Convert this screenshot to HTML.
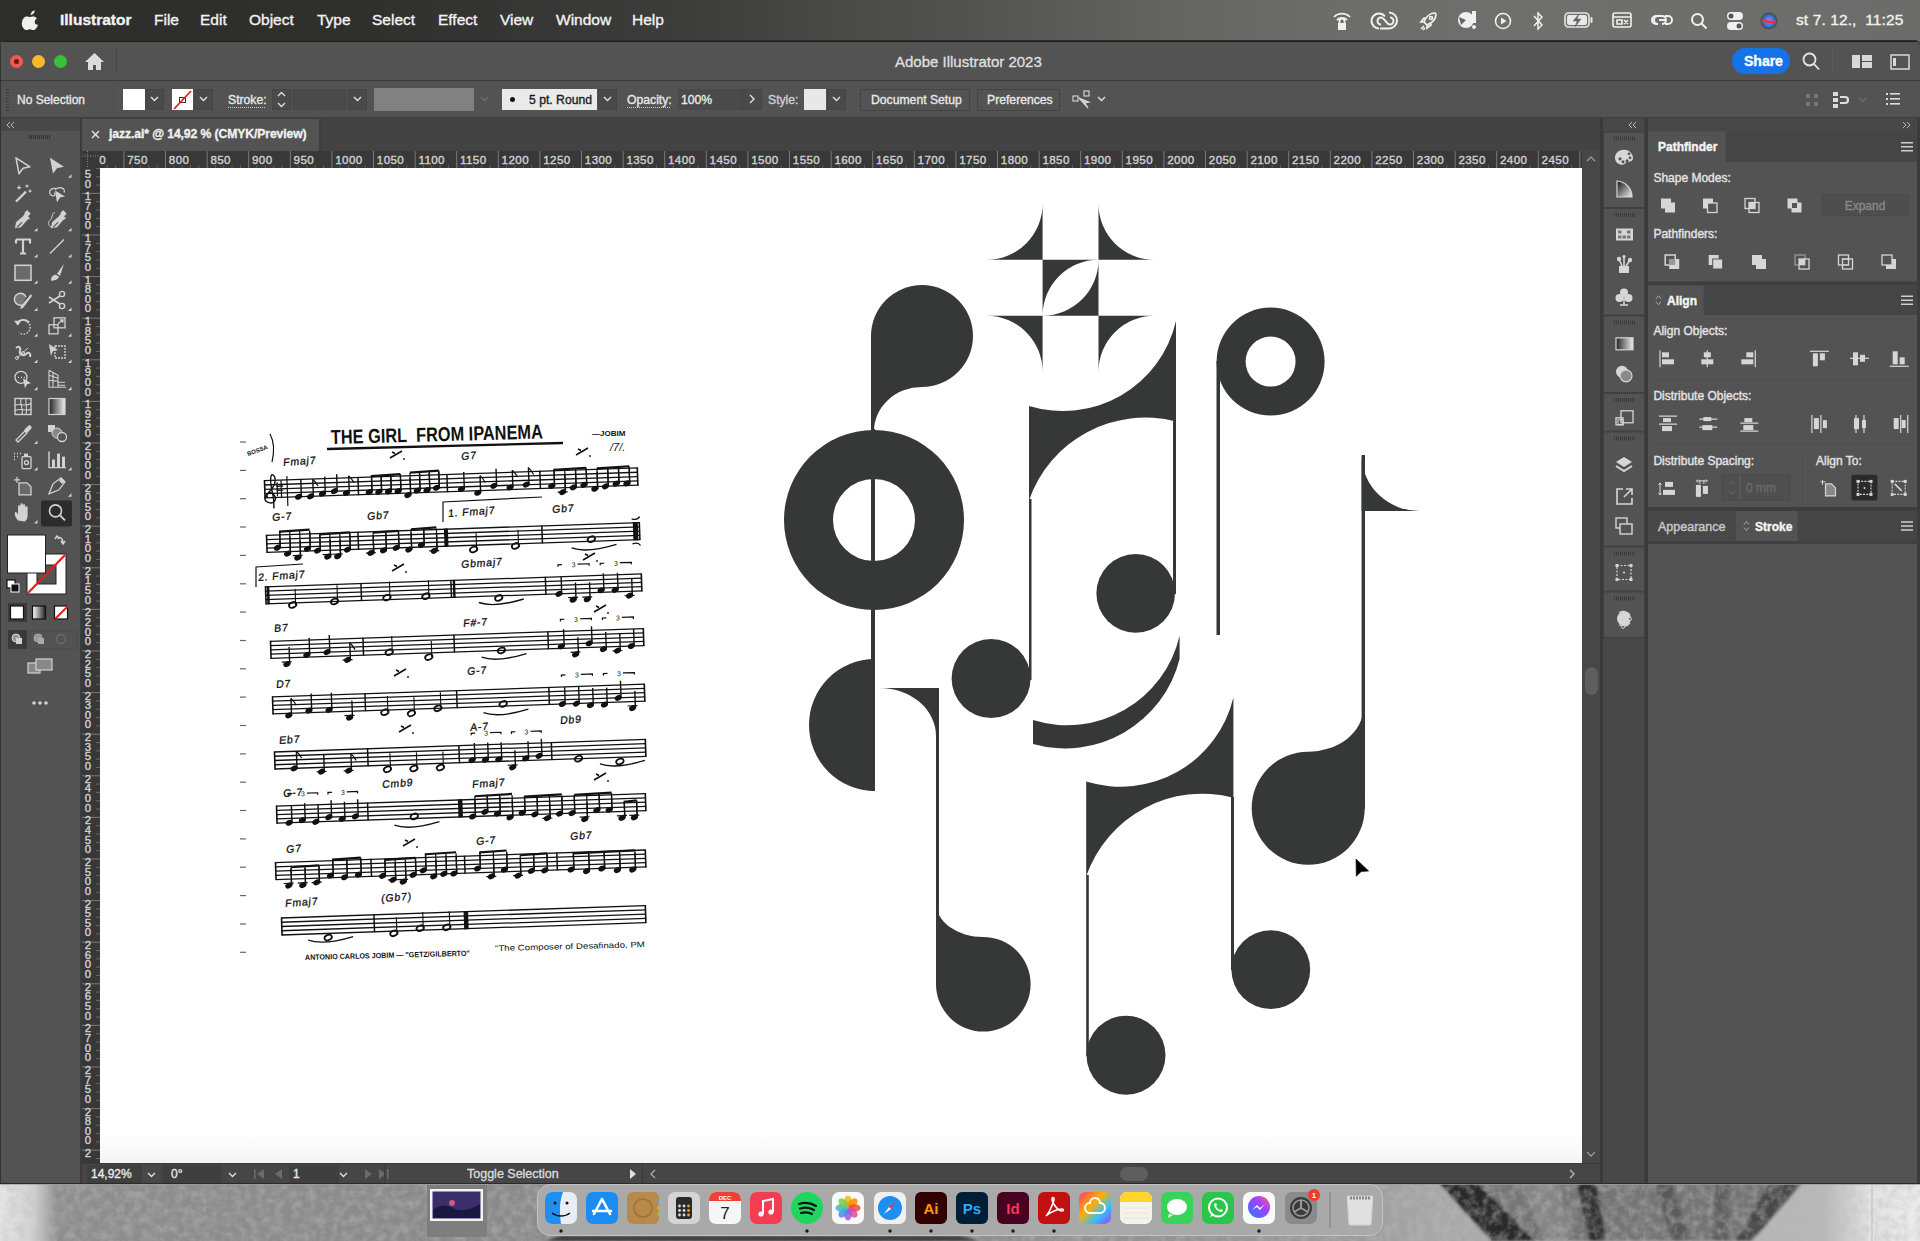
<!DOCTYPE html>
<html><head><meta charset="utf-8">
<style>
*{margin:0;padding:0;box-sizing:border-box}
html,body{width:1920px;height:1241px;overflow:hidden}
body{position:relative;background:#8c8c8c;font-family:"Liberation Sans",sans-serif;color:#e6e6e6}
.a{position:absolute}
#menubar span,#win span{-webkit-text-stroke:0.35px currentColor}

svg{position:absolute;overflow:visible}
#wall{left:0;top:1150px;width:1920px;height:91px;background:linear-gradient(90deg,#e0e0e0 0,#b0b0b0 40px,#8e8e8e 70px,#8a8a8a 400px,#8c8c8c 900px,#7e7e7e 1300px,#8a8a8a 1600px,#a0a0a0 1800px,#d6d6d6 1880px)}
#menubar{left:0;top:0;width:1920px;height:42px;background:linear-gradient(90deg,#2d2d2a 0,#2f2f2c 350px,#3c3c3b 680px,#4a4a47 850px,#555553 1000px,#636360 1160px,#6c6c6a 1320px,#6f6f6d 1500px,#6c6c6a 1920px)}
.mi{top:11px;font-size:15.5px;color:#f2f2f2;white-space:nowrap}
#win{left:0;top:41px;width:1920px;height:1142px;background:#535353;border-radius:5px 5px 0 0;overflow:hidden;box-shadow:0 0 0 1px #2a2a2a}
#title{left:0;top:0;width:1920px;height:40px;background:#535353;border-bottom:1px solid #3b3b3b;box-shadow:inset 0 1px 0 #1f1f1f}
#ctrl{left:0;top:40px;width:1920px;height:37px;background:#535353;border-bottom:1px solid #3d3d3d}
.ct{font-size:12.2px;color:#e8e8e8;white-space:nowrap;top:11px}
.dd{background:#4a4a4a;border:1px solid #454545}
.chev{width:9px;height:9px}
#tabbar{left:82px;top:77px;width:1518px;height:33px;background:#434343}
#tab{left:82px;top:78px;width:239px;height:32px;background:#535353;border-right:2px solid #3e3e3e}
#ruler{left:82px;top:110px;width:1500px;height:17px;background:#383838}
#vruler{left:82px;top:127px;width:18px;height:995px;background:#383838}
#canvas{left:100px;top:127px;width:1482px;height:995px;background:#fff;overflow:hidden}
#vscroll{left:1582px;top:109px;width:18px;height:1013px;background:#474747}
#status{left:82px;top:1122px;width:1518px;height:20px;background:#464646;border-top:1px solid #3a3a3a}
#tools{left:0;top:77px;width:80px;height:1065px;background:#535353}
#toolsep{left:80px;top:77px;width:2px;height:1065px;background:#3c3c3c}
#iconcol{left:1600px;top:77px;width:48px;height:1065px;background:#474747}
#rpanel{left:1648px;top:77px;width:272px;height:1065px;background:#535353}
.rn{font-size:12.5px;color:#d8d8d8;top:1px;white-space:nowrap}
.vd{font-size:12px;color:#d0d0d0;left:1px;width:14px;text-align:center;line-height:12px}
</style></head><body>
<div class="a" id="wall" style="left:0;top:1150px;width:1920px;height:91px;overflow:hidden">
<svg style="left:0;top:-1150px" width="1920" height="1241">
<defs>
<filter id="bl" x="-20%" y="-20%" width="140%" height="140%"><feGaussianBlur stdDeviation="4"/></filter>
<filter id="bl2"><feGaussianBlur stdDeviation="1.5"/></filter>
<linearGradient id="wg" x1="0" x2="1"><stop offset="0" stop-color="#e6e6e6"/><stop offset="0.018" stop-color="#d0d0d0"/><stop offset="0.03" stop-color="#8e8e8e"/><stop offset="0.25" stop-color="#8a8a8a"/><stop offset="0.5" stop-color="#8e8e8e"/><stop offset="0.7" stop-color="#9a9a9a"/><stop offset="0.75" stop-color="#a8a8a8"/><stop offset="0.95" stop-color="#b8b8b8"/><stop offset="0.975" stop-color="#e4e4e4"/><stop offset="1" stop-color="#ebebeb"/></linearGradient>
<filter id="nz" x="0" y="0" width="100%" height="100%"><feTurbulence type="fractalNoise" baseFrequency="0.12" numOctaves="3" seed="4"/><feColorMatrix values="0 0 0 0 0.5  0 0 0 0 0.5  0 0 0 0 0.5  0 0 0 2.2 -0.8"/></filter>
</defs>
<rect x="0" y="1150" width="1920" height="91" fill="url(#wg)"/>
<g filter="url(#bl2)">
<path d="M1439 1183H1802L1745 1241H1500Z" fill="#747474"/>
<path d="M1439 1183H1478L1535 1241H1492Z" fill="#2c2c2c"/>
<path d="M1576 1183H1596L1606 1241H1590Z" fill="#2e2e2e"/>
<path d="M1655 1183H1672L1690 1241H1672Z" fill="#5a5a5a"/>
<path d="M1715 1183H1730L1728 1241H1712Z" fill="#5e5e5e"/>
<path d="M1770 1183H1802L1752 1241H1735Z" fill="#4a4a4a"/>
<path d="M1520 1183H1560L1570 1241H1545Z" fill="#858585"/>
</g>
<path d="M1872 1183V1241" stroke="#bbb" stroke-width="1"/>
<rect x="0" y="1183" width="1920" height="58" filter="url(#nz)" opacity="0.45"/>
<rect x="0" y="1183" width="1920" height="2" fill="#9c9c9c" opacity="0.7"/>
<rect x="427" y="1185" width="60" height="52" fill="#7e7e7e"/>
<rect x="430" y="1189" width="53" height="32" fill="#f4f4f4"/>
<rect x="432.5" y="1191.5" width="48" height="27" fill="#3a2f6a"/>
<path d="M433 1210q10-8 20-2t27-4v14h-47z" fill="#1a1840"/>
<circle cx="452" cy="1203" r="3" fill="#d05a80"/>
<path d="M560 1236H960L980 1241H545Z" fill="#3a3a3a" filter="url(#bl2)"/>
<rect x="537.5" y="1184.5" width="845" height="51" rx="13" fill="#a9a9a9" stroke="#c4c4c4" stroke-width="1"/>
<g transform="translate(545,1192)"><rect width="32" height="32" rx="7" fill="#e8eef6"/><path d="M0 7a7 7 0 0 1 7-7h11c-3 8-4 16-2 32H7a7 7 0 0 1-7-7z" fill="#1e8ff0"/><circle cx="10" cy="11" r="1.5" fill="#111"/><circle cx="22" cy="11" r="1.5" fill="#111"/><path d="M7 21c5 4 13 4 18 0" stroke="#111" stroke-width="1.4" fill="none"/></g><g transform="translate(586,1192)"><rect width="32" height="32" rx="7" fill="#1a8cf2"/><path d="M16 7l-8 15M16 7l8 15M7 19h18" stroke="#fff" stroke-width="2.6" stroke-linecap="round"/></g><g transform="translate(627,1192)"><rect width="32" height="32" rx="6" fill="#b88a4a"/><circle cx="16" cy="16" r="9" fill="none" stroke="#9c7238" stroke-width="1.5"/><rect x="30" y="8" width="2" height="4" fill="#5aa0e8"/><rect x="30" y="14" width="2" height="4" fill="#e89a4a"/><rect x="30" y="20" width="2" height="4" fill="#7ac060"/></g><g transform="translate(668,1192)"><rect width="32" height="32" rx="7" fill="#d4d4d4"/><rect x="8" y="5" width="16" height="22" rx="3" fill="#2a2a2a"/><circle cx="11.5" cy="14.0" r="1.4" fill="#ddd"/><circle cx="11.5" cy="18.5" r="1.4" fill="#ddd"/><circle cx="11.5" cy="23.0" r="1.4" fill="#ddd"/><circle cx="16.0" cy="14.0" r="1.4" fill="#ddd"/><circle cx="16.0" cy="18.5" r="1.4" fill="#ddd"/><circle cx="16.0" cy="23.0" r="1.4" fill="#ddd"/><circle cx="20.5" cy="14.0" r="1.4" fill="#f0a030"/><circle cx="20.5" cy="18.5" r="1.4" fill="#f0a030"/><circle cx="20.5" cy="23.0" r="1.4" fill="#f0a030"/></g><g transform="translate(709,1192)"><rect width="32" height="32" rx="7" fill="#f6f6f6"/><path d="M0 7a7 7 0 0 1 7-7h18a7 7 0 0 1 7 7v2H0z" fill="#ee4035"/><text x="16" y="7.5" font-size="6" font-family="Liberation Sans" font-weight="bold" fill="#fff" text-anchor="middle">DEC</text><text x="16" y="27" font-size="17" font-family="Liberation Sans" fill="#222" text-anchor="middle">7</text></g><g transform="translate(750,1192)"><rect width="32" height="32" rx="7" fill="#f43c52"/><path d="M13 22V9l10-2v13" stroke="#fff" stroke-width="2" fill="none"/><circle cx="11" cy="22" r="2.6" fill="#fff"/><circle cx="21" cy="20" r="2.6" fill="#fff"/></g><g transform="translate(791,1192)"><circle cx="16" cy="16" r="16" fill="#1ed760"/><path d="M8 12c6-2 12-1 17 2M9 16.5c5-1.5 10-1 14 1.5M10 21c4-1 8-.5 11 1" stroke="#111" stroke-width="2.2" fill="none" stroke-linecap="round"/></g><g transform="translate(832,1192)"><rect width="32" height="32" rx="7" fill="#fafafa"/><ellipse cx="16" cy="9.5" rx="3.8" ry="6" fill="#f5b800" opacity="0.85" transform="rotate(0 16 16)"/><ellipse cx="16" cy="9.5" rx="3.8" ry="6" fill="#f58a00" opacity="0.85" transform="rotate(45 16 16)"/><ellipse cx="16" cy="9.5" rx="3.8" ry="6" fill="#f04a3a" opacity="0.85" transform="rotate(90 16 16)"/><ellipse cx="16" cy="9.5" rx="3.8" ry="6" fill="#d84a9a" opacity="0.85" transform="rotate(135 16 16)"/><ellipse cx="16" cy="9.5" rx="3.8" ry="6" fill="#9a5ad8" opacity="0.85" transform="rotate(180 16 16)"/><ellipse cx="16" cy="9.5" rx="3.8" ry="6" fill="#4a8ae8" opacity="0.85" transform="rotate(225 16 16)"/><ellipse cx="16" cy="9.5" rx="3.8" ry="6" fill="#3ab8c8" opacity="0.85" transform="rotate(270 16 16)"/><ellipse cx="16" cy="9.5" rx="3.8" ry="6" fill="#7ac84a" opacity="0.85" transform="rotate(315 16 16)"/></g><g transform="translate(874,1192)"><rect width="32" height="32" rx="7" fill="#f0f0f0"/><circle cx="16" cy="16" r="12" fill="#1e8ef0"/><path d="M22 10l-5 7-2-2z" fill="#f33"/><path d="M10 22l5-7 2 2z" fill="#fff"/></g><g transform="translate(915,1192)"><rect width="32" height="32" rx="6" fill="#330000"/><text x="16" y="22" font-size="15" font-family="Liberation Sans" font-weight="bold" fill="#ff9a00" text-anchor="middle">Ai</text></g><g transform="translate(956,1192)"><rect width="32" height="32" rx="6" fill="#001e36"/><text x="16" y="22" font-size="15" font-family="Liberation Sans" font-weight="bold" fill="#31a8ff" text-anchor="middle">Ps</text></g><g transform="translate(997,1192)"><rect width="32" height="32" rx="6" fill="#49021f"/><text x="16" y="22" font-size="15" font-family="Liberation Sans" font-weight="bold" fill="#ff3366" text-anchor="middle">Id</text></g><g transform="translate(1038,1192)"><rect width="32" height="32" rx="6" fill="#c21010"/><path d="M8 24c3-3 8-14 8-17 0-2-2-2-2 0 0 4 6 12 10 12 2 0 2-2 0-2-4 0-12 3-16 7z" stroke="#fff" stroke-width="1.6" fill="none"/></g><g transform="translate(1079,1192)"><defs><linearGradient id="ccg" x1="0" y1="0" x2="1" y2="1"><stop offset="0" stop-color="#ff3a6a"/><stop offset="0.4" stop-color="#ffb000"/><stop offset="0.7" stop-color="#30c0ff"/><stop offset="1" stop-color="#a040ff"/></linearGradient></defs><rect width="32" height="32" rx="7" fill="url(#ccg)"/><path d="M11 21a5 5 0 0 1 0-10 5 5 0 0 1 10 0 5 5 0 0 1 0 10z" stroke="#fff" stroke-width="2" fill="none"/></g><g transform="translate(1120,1192)"><rect width="32" height="32" rx="7" fill="#f6f3e8"/><path d="M0 7a7 7 0 0 1 7-7h18a7 7 0 0 1 7 7v3H0z" fill="#ffd52e"/><path d="M3 16h26M3 21h26M3 26h26" stroke="#ddd" stroke-width="0.8"/></g><g transform="translate(1161,1192)"><rect width="32" height="32" rx="7" fill="#3ad35a"/><ellipse cx="16" cy="15" rx="10" ry="8" fill="#fff"/><path d="M8 22l-1 4 5-3z" fill="#fff"/></g><g transform="translate(1202,1192)"><rect width="32" height="32" rx="7" fill="#2cc54b"/><circle cx="16" cy="15.5" r="9" fill="none" stroke="#fff" stroke-width="2"/><path d="M8 25l2-4 3 2z" fill="#fff"/><path d="M12 12c0 4 4 8 8 8l1-2-2-1-1 1c-2-1-3-2-4-4l1-1-1-2z" fill="#fff"/></g><g transform="translate(1243,1192)"><rect width="32" height="32" rx="7" fill="#fafafa"/><defs><linearGradient id="msg" x1="0" y1="1" x2="1" y2="0"><stop offset="0" stop-color="#2a7bff"/><stop offset="0.6" stop-color="#a040ff"/><stop offset="1" stop-color="#ff5a8a"/></linearGradient></defs><circle cx="16" cy="15" r="11" fill="url(#msg)"/><path d="M9 18l5-5 3 3 5-4-5 6-3-3z" fill="#fff"/></g><g transform="translate(1285,1192)"><rect width="32" height="32" rx="7" fill="#8a8a8a"/><circle cx="16" cy="16" r="11" fill="#3a3a3a"/><circle cx="16" cy="16" r="8" fill="none" stroke="#9a9a9a" stroke-width="1.5"/><path d="M16 16V8M16 16l7 4M16 16l-7 4" stroke="#9a9a9a" stroke-width="2"/><circle cx="29" cy="3" r="6" fill="#ee3b30"/><text x="29" y="6" font-size="8" font-family="Liberation Sans" font-weight="bold" fill="#fff" text-anchor="middle">1</text></g><circle cx="561" cy="1231" r="1.7" fill="#1a1a1a"/><circle cx="807" cy="1231" r="1.7" fill="#1a1a1a"/><circle cx="890" cy="1231" r="1.7" fill="#1a1a1a"/><circle cx="931" cy="1231" r="1.7" fill="#1a1a1a"/><circle cx="972" cy="1231" r="1.7" fill="#1a1a1a"/><circle cx="1013" cy="1231" r="1.7" fill="#1a1a1a"/><circle cx="1054" cy="1231" r="1.7" fill="#1a1a1a"/><circle cx="1259" cy="1231" r="1.7" fill="#1a1a1a"/>
<path d="M1330 1192V1228" stroke="#7a7a7a" stroke-width="1"/>
<path d="M1347 1196h26l-2 29h-22z" fill="#e0e0e0" stroke="#cfcfcf"/>
<path d="M1350 1198h20" stroke="#888" stroke-width="3" stroke-dasharray="2 1"/>
</svg></div>
<div class="a" id="menubar">
  <svg style="left:23px;top:10px" width="17" height="20" viewBox="0 0 17 20"><path fill="#f0f0f0" d="M11.6 0.5c0.1 1.2-0.4 2.3-1.1 3.1-0.7 0.8-1.8 1.4-2.8 1.3-0.1-1.1 0.4-2.2 1.1-3 0.7-0.8 1.9-1.4 2.8-1.4zM15.2 14.7c-0.5 1.1-0.7 1.6-1.3 2.5-0.9 1.3-2.1 2.9-3.6 2.9-1.3 0-1.7-0.9-3.5-0.9-1.8 0-2.2 0.9-3.5 0.9-1.5 0-2.6-1.5-3.5-2.8C-2.6 13.6-0.2 7.5 3 6.6c1.5-0.4 2.7 0.5 3.7 0.5 1 0 2-0.6 3.4-0.5 0.8 0 2.6 0.3 3.8 2-3.3 1.8-2.8 6.6 1.3 6.1z"/></svg>
  <span class="a mi" style="left:60px;font-weight:bold">Illustrator</span>
  <span class="a mi" style="left:154px">File</span>
  <span class="a mi" style="left:200px">Edit</span>
  <span class="a mi" style="left:249px">Object</span>
  <span class="a mi" style="left:317px">Type</span>
  <span class="a mi" style="left:372px">Select</span>
  <span class="a mi" style="left:438px">Effect</span>
  <span class="a mi" style="left:500px">View</span>
  <span class="a mi" style="left:556px">Window</span>
  <span class="a mi" style="left:632px">Help</span>
  <!-- status icons -->
  <svg style="left:1332px;top:10px" width="20" height="22" viewBox="0 0 20 22" fill="none" stroke="#f0f0f0" stroke-width="1.8"><path d="M2 7a11 11 0 0 1 16 0M5 10a7 7 0 0 1 10 0"/><rect x="6" y="13" width="8" height="7" fill="#f0f0f0" stroke="none"/><path d="M7.5 13v-2a2.5 2.5 0 0 1 5 0v2"/></svg>
  <svg style="left:1372px;top:11px" width="24" height="19" viewBox="0 0 24 19" fill="none" stroke="#f0f0f0" stroke-width="2"><path d="M7 17.5a7.5 7.5 0 0 1 0-15c2.5 0 4.5 1 6 3M17 1.5a7.5 7.5 0 0 1 0 16H8"/><path d="M9 13.5a3.5 3.5 0 0 1 0-7c2 0 3 1.5 4.5 3.5s2.5 3.5 4.5 3.5a3.5 3.5 0 0 0 0-7"/></svg>
  <svg style="left:1418px;top:10px" width="22" height="22" viewBox="0 0 22 22" fill="none" stroke="#f0f0f0" stroke-width="1.7"><path d="M17 3c-5 0-9 4-11 9l3 3c5-2 9-6 9-11zM6 12l-3 0 3-4 3 0M9 15l0 3 4-3 0-3"/><circle cx="13" cy="8" r="1.5"/><path d="M3 19l3-3M5 20l2-2"/></svg>
  <svg style="left:1457px;top:9px" width="22" height="22" viewBox="0 0 22 22"><circle cx="9" cy="11" r="8" fill="#f0f0f0"/><path d="M9 11 2 8l2 8z" fill="#666"/><rect x="15" y="2" width="4" height="12" fill="#f0f0f0"/><circle cx="17" cy="18" r="2" fill="#f0f0f0"/></svg>
  <svg style="left:1494px;top:12px" width="18" height="18" viewBox="0 0 18 18" fill="none" stroke="#f0f0f0" stroke-width="1.6"><circle cx="9" cy="9" r="7.5"/><path d="M7 5.5v7l5.5-3.5z" fill="#f0f0f0" stroke="none"/></svg>
  <svg style="left:1532px;top:11px" width="12" height="20" viewBox="0 0 12 20" fill="none" stroke="#f0f0f0" stroke-width="1.5"><path d="M2 5l8 9-4 4V2l4 4-8 9"/></svg>
  <svg style="left:1564px;top:12px" width="30" height="16" viewBox="0 0 30 16"><rect x="1" y="1" width="24" height="14" rx="3.5" fill="none" stroke="#e8e8e8" stroke-width="1.6"/><rect x="3" y="3" width="20" height="10" rx="2" fill="#e8e8e8"/><rect x="26.5" y="5" width="2" height="6" rx="1" fill="#e8e8e8"/><path d="M15 2l-6 7h4l-2 6 6-8h-4z" fill="#666" stroke="#666" stroke-width="0.5"/></svg>
  <svg style="left:1612px;top:11px" width="20" height="18" viewBox="0 0 20 18" fill="none" stroke="#f0f0f0" stroke-width="1.6"><rect x="1" y="2" width="18" height="14" rx="2"/><path d="M1 6h18M5 9h5v4H5zM12 9l4 4M16 9l-4 4"/></svg>
  <svg style="left:1650px;top:12px" width="24" height="16" viewBox="0 0 24 16" fill="none" stroke="#f0f0f0" stroke-width="2"><path d="M9 4H6a4 4 0 0 0 0 8h2M15 4h3a4 4 0 0 1 0 8h-3M9 8h6"/><path d="M8 12a4 4 0 0 1 0-8h4a4 4 0 0 1 0 8"/></svg>
  <svg style="left:1690px;top:12px" width="18" height="18" viewBox="0 0 18 18" fill="none" stroke="#f0f0f0" stroke-width="2"><circle cx="7.5" cy="7.5" r="5.5"/><path d="M11.5 11.5l5 5"/></svg>
  <svg style="left:1726px;top:10px" width="18" height="21" viewBox="0 0 18 21" fill="#f0f0f0"><rect x="1" y="2" width="16" height="8" rx="4"/><rect x="1" y="12" width="16" height="8" rx="4"/><circle cx="5" cy="6" r="2.5" fill="#555"/><circle cx="13" cy="16" r="2.5" fill="#555"/></svg>
  <svg style="left:1759px;top:11px" width="20" height="20" viewBox="0 0 20 20"><defs><radialGradient id="sg"><stop offset="0" stop-color="#ff5ae0"/><stop offset="0.5" stop-color="#3a7df0"/><stop offset="1" stop-color="#444"/></radialGradient></defs><circle cx="10" cy="10" r="8.5" fill="url(#sg)"/><path d="M3 11c3-4 7 3 14-1" stroke="#e33" stroke-width="2.5" fill="none"/></svg>
  <span class="a mi" style="left:1796px;top:11px;letter-spacing:0.1px">st 7. 12.,&nbsp; 11:25</span>
</div>

<div class="a" id="win">
  <div class="a" id="title">
    <div class="a" style="left:10px;top:14px;width:13px;height:13px;border-radius:50%;background:#ee5a52"><div class="a" style="left:4px;top:4px;width:5px;height:5px;border-radius:50%;background:#6a1510"></div></div>
    <div class="a" style="left:32px;top:14px;width:13px;height:13px;border-radius:50%;background:#f6bb2a"></div>
    <div class="a" style="left:54px;top:14px;width:13px;height:13px;border-radius:50%;background:#38c23a"></div>
    <svg style="left:84px;top:11px" width="21" height="19" viewBox="0 0 21 19"><path d="M10.5 1L1 10h3v8h5v-5h3v5h5v-8h3z" fill="#dcdcdc"/></svg>
    <div class="a" style="left:116px;top:7px;width:1px;height:26px;background:#464646"></div>
    <span class="a" style="left:895px;top:12px;font-size:15px;color:#dedede;white-space:nowrap">Adobe Illustrator 2023</span>
    <div class="a" style="left:1732px;top:7px;width:58px;height:26px;border-radius:13px;background:#1473e6"></div>
    <span class="a" style="left:1744px;top:12px;font-size:14px;color:#fff;font-weight:bold">Share</span>
    <svg style="left:1802px;top:11px" width="18" height="19" viewBox="0 0 18 19" fill="none" stroke="#e6e6e6" stroke-width="1.8"><circle cx="7.5" cy="7.5" r="6"/><path d="M12 12l5 5.5"/></svg>
    <div class="a" style="left:1832px;top:8px;width:1px;height:22px;background:#5c5c5c"></div>
    <svg style="left:1852px;top:14px" width="20" height="13" viewBox="0 0 20 13" fill="#d8d8d8"><rect x="0" y="0" width="8" height="13"/><rect x="10" y="0" width="10" height="6"/><rect x="10" y="7" width="10" height="6"/></svg>
    <svg style="left:1890px;top:13px" width="20" height="16" viewBox="0 0 20 16" fill="none" stroke="#d8d8d8" stroke-width="1.5"><rect x="1" y="1" width="18" height="14"/><rect x="3" y="4" width="3" height="8" fill="#d8d8d8" stroke="none"/></svg>
  </div>

  <div class="a" id="ctrl">
    <div class="a" style="left:6px;top:8px;width:3px;height:22px;background:repeating-linear-gradient(#3a3a3a 0 1px,transparent 1px 3px)"></div>
    <span class="a ct" style="left:17px;top:12px;font-size:12px">No Selection</span>
    <div class="a" style="left:113px;top:4px;width:1px;height:29px;background:#4c4c4c"></div>
    <div class="a" style="left:123px;top:8px;width:22px;height:21px;background:#fff"></div>
    <div class="a dd" style="left:145px;top:8px;width:19px;height:21px"></div>
    <svg style="left:150px;top:15px" width="9" height="6" viewBox="0 0 9 6" fill="none" stroke="#e0e0e0" stroke-width="1.4"><path d="M1 1l3.5 3.5L8 1"/></svg>
    <div class="a" style="left:172px;top:8px;width:21px;height:21px;background:#fff"></div>
    <div class="a" style="left:179px;top:16px;width:7px;height:6px;border:1.5px solid #333"></div>
    <svg style="left:172px;top:8px" width="21" height="21"><path d="M2 20L19 2" stroke="#e02020" stroke-width="1.8"/></svg>
    <div class="a dd" style="left:194px;top:8px;width:19px;height:21px"></div>
    <svg style="left:199px;top:15px" width="9" height="6" viewBox="0 0 9 6" fill="none" stroke="#e0e0e0" stroke-width="1.4"><path d="M1 1l3.5 3.5L8 1"/></svg>
    <span class="a ct" style="left:228px;top:12px">Stroke:</span>
    <div class="a" style="left:228px;top:26px;width:37px;height:1px;background:repeating-linear-gradient(90deg,#cfcfcf 0 1px,transparent 1px 2px)"></div>
    <div class="a dd" style="left:272px;top:8px;width:19px;height:21px"></div>
    <svg style="left:277px;top:10px" width="9" height="17" viewBox="0 0 9 17" fill="none" stroke="#e0e0e0" stroke-width="1.3"><path d="M1 5l3.5-3.5L8 5M1 12l3.5 3.5L8 12"/></svg>
    <div class="a" style="left:292px;top:8px;width:55px;height:21px;background:#4a4a4a"></div>
    <div class="a dd" style="left:348px;top:8px;width:19px;height:21px"></div>
    <svg style="left:353px;top:15px" width="9" height="6" viewBox="0 0 9 6" fill="none" stroke="#e0e0e0" stroke-width="1.4"><path d="M1 1l3.5 3.5L8 1"/></svg>
    <div class="a" style="left:374px;top:7px;width:100px;height:23px;background:#818181"></div>
    <svg style="left:480px;top:15px" width="9" height="6" viewBox="0 0 9 6" fill="none" stroke="#6a6a6a" stroke-width="1.4"><path d="M1 1l3.5 3.5L8 1"/></svg>
    <div class="a" style="left:502px;top:8px;width:95px;height:21px;background:#eaeaea"></div>
    <div class="a" style="left:510px;top:16px;width:5px;height:5px;border-radius:50%;background:#111"></div>
    <span class="a ct" style="left:529px;top:12px;color:#1a1a1a">5 pt. Round</span>
    <div class="a dd" style="left:598px;top:8px;width:19px;height:21px"></div>
    <svg style="left:603px;top:15px" width="9" height="6" viewBox="0 0 9 6" fill="none" stroke="#e0e0e0" stroke-width="1.4"><path d="M1 1l3.5 3.5L8 1"/></svg>
    <span class="a ct" style="left:627px;top:12px">Opacity:</span>
    <div class="a" style="left:627px;top:26px;width:43px;height:1px;background:repeating-linear-gradient(90deg,#cfcfcf 0 1px,transparent 1px 2px)"></div>
    <div class="a" style="left:678px;top:8px;width:64px;height:21px;background:#4a4a4a"></div>
    <span class="a ct" style="left:681px;top:12px">100%</span>
    <div class="a dd" style="left:742px;top:8px;width:20px;height:21px"></div>
    <svg style="left:749px;top:13px" width="6" height="10" viewBox="0 0 6 10" fill="none" stroke="#e0e0e0" stroke-width="1.4"><path d="M1 1l4 4-4 4"/></svg>
    <span class="a ct" style="left:768px;top:12px;color:#d0d0d0">Style:</span>
    <div class="a" style="left:804px;top:8px;width:22px;height:21px;background:#e8e8e8"></div>
    <div class="a dd" style="left:827px;top:8px;width:19px;height:21px"></div>
    <svg style="left:832px;top:15px" width="9" height="6" viewBox="0 0 9 6" fill="none" stroke="#e0e0e0" stroke-width="1.4"><path d="M1 1l3.5 3.5L8 1"/></svg>
    <div class="a" style="left:860px;top:8px;width:110px;height:22px;border:1px solid #444;background:#535353"></div>
    <span class="a ct" style="left:871px;top:12px">Document Setup</span>
    <div class="a" style="left:977px;top:8px;width:83px;height:22px;border:1px solid #444;background:#535353"></div>
    <span class="a ct" style="left:987px;top:12px">Preferences</span>
    <svg style="left:1072px;top:9px" width="20" height="20" viewBox="0 0 20 20" fill="none" stroke="#d0d0d0" stroke-width="1.2"><rect x="1" y="6" width="5" height="5"/><rect x="12" y="1" width="5" height="5"/><path d="M7 8l9 10-3-5 4-1z" fill="#d0d0d0"/></svg>
    <svg style="left:1097px;top:15px" width="9" height="6" viewBox="0 0 9 6" fill="none" stroke="#e0e0e0" stroke-width="1.4"><path d="M1 1l3.5 3.5L8 1"/></svg>
    <svg style="left:1803px;top:10px" width="18" height="18" viewBox="0 0 18 18" fill="#777"><rect x="3" y="3" width="4" height="4"/><rect x="11" y="3" width="4" height="4"/><rect x="3" y="11" width="4" height="4"/><rect x="11" y="11" width="4" height="4"/></svg>
    <svg style="left:1832px;top:10px" width="18" height="18" viewBox="0 0 18 18"><rect x="1" y="1" width="5" height="4" fill="#ddd"/><rect x="1" y="7" width="5" height="4" fill="#ddd"/><rect x="1" y="13" width="5" height="4" fill="#ddd"/><path d="M8 6h5a3 3 0 0 1 0 6H8" fill="none" stroke="#ddd" stroke-width="2.2"/></svg>
    <svg style="left:1858px;top:16px" width="9" height="6" viewBox="0 0 9 6" fill="none" stroke="#6a6a6a" stroke-width="1.4"><path d="M1 1l3.5 3.5L8 1"/></svg>
    <svg style="left:1886px;top:12px" width="14" height="12" viewBox="0 0 14 12" fill="#ddd"><rect x="0" y="0" width="2" height="2"/><rect x="0" y="5" width="2" height="2"/><rect x="0" y="10" width="2" height="2"/><rect x="4" y="0" width="10" height="1.6"/><rect x="4" y="5" width="10" height="1.6"/><rect x="4" y="10" width="10" height="1.6"/></svg>
  </div>
  <div class="a" id="tabbar"></div>
  <div class="a" id="tab">
    <svg style="left:9px;top:11px" width="9" height="9"><path d="M1 1L8 8M8 1L1 8" stroke="#e8e8e8" stroke-width="1.4"/></svg>
    <span class="a" style="left:27px;top:8px;font-size:12.2px;color:#f0f0f0;white-space:nowrap;font-weight:bold;letter-spacing:-0.1px">jazz.ai* @ 14,92 % (CMYK/Preview)</span>
  </div>
  <div class="a" id="ruler"></div>
  <div class="a" id="vruler"></div>
  <div class="a" id="canvas"><div class="a" style="left:0;top:965px;width:1482px;height:30px;background:linear-gradient(#fff,#f3f3f3)"></div>
  <svg style="left:-100px;top:-168px" width="1920" height="1241" viewBox="0 0 1920 1241">
   <g fill="#363737">
    <!-- top-left drop -->
    <circle cx="922" cy="336" r="51"/>
    <path d="M871 336H922V387A48 44 0 0 0 874 431H871Z"/>
    <rect x="871" y="429" width="4" height="362"/>
    <path fill-rule="evenodd" d="M964 520A90 90 0 1 1 784 520A90 90 0 1 1 964 520ZM915 520A41 41 0 1 0 833 520A41 41 0 1 0 915 520Z"/>
    <rect x="871" y="470" width="4" height="100"/>
    <path d="M875 659A66 66 0 0 0 875 791Z"/>
    <!-- flag 3 + drop -->
    <path d="M880 688H939V736H936A56 48 0 0 0 880 688Z"/>
    <rect x="936" y="688" width="3" height="297"/>
    <path d="M936 903A47 34 0 0 0 983 937V984H936Z"/>
    <circle cx="983.3" cy="984.2" r="47.3"/>
    <!-- star -->
    <path d="M1042.6 203.2V259.8H986.7A56 56 0 0 0 1042.6 203.2Z"/>
    <path d="M1098.5 203.2V259.8H1154.4A56 56 0 0 1 1098.5 203.2Z"/>
    <path d="M1042.6 371.7V315.7H986.7A56 56 0 0 1 1042.6 371.7Z"/>
    <path d="M1098.5 371.7V315.7H1154.4A56 56 0 0 0 1098.5 371.7Z"/>
    <path d="M1042.6 259.8H1098.5A56 56 0 0 0 1042.6 315.7Z"/>
    <path d="M1098.5 315.7H1042.6A56 56 0 0 0 1098.5 259.8Z"/>
    <!-- flag 1 -->
    <path d="M1029 406V500.4A123 123 0 0 1 1176 421.5V321A116 116 0 0 1 1029 406Z"/>
    <rect x="1029" y="499" width="2.5" height="181"/>
    <rect x="1173" y="421" width="3" height="173"/>
    <circle cx="991.1" cy="678.5" r="39.5"/>
    <circle cx="1135.7" cy="593.4" r="39.3"/>
    <!-- crescent -->
    <path d="M1033 720A115.5 115.5 0 0 0 1179.6 635.8V659A118.3 118.3 0 0 1 1033 744Z"/>
    <!-- flag 2 -->
    <path d="M1086.2 781.5V876.2A123 123 0 0 1 1233.4 797.7V697.6A116 116 0 0 1 1086.2 781.5Z"/>
    <rect x="1086.2" y="875" width="2.6" height="181"/>
    <rect x="1231" y="797" width="3" height="173"/>
    <circle cx="1126" cy="1055.2" r="39.5"/>
    <circle cx="1270.8" cy="969.6" r="39.4"/>
    <!-- ring 2 -->
    <path fill-rule="evenodd" d="M1324.6 361.6A54 54 0 1 1 1216.6 361.6A54 54 0 1 1 1324.6 361.6ZM1295.6 361.6A25 25 0 1 0 1245.6 361.6A25 25 0 1 0 1295.6 361.6Z"/>
    <rect x="1216.5" y="361" width="3.5" height="274"/>
    <!-- right flag + drop -->
    <path d="M1361.6 455A58 56 0 0 0 1421 511H1361.6Z"/>
    <rect x="1361.6" y="455" width="3.4" height="354"/>
    <path d="M1308 752A57 43 0 0 0 1363 709H1365V808H1308Z"/>
    <circle cx="1308.2" cy="808.2" r="56.5"/>
   </g>
   <!--SHEET--><g id="sheet">
<g transform="translate(264.0,480.7) rotate(-1.95)">
<path d="M0 0.00H374.0" stroke="#111" stroke-width="1.3"/>
<path d="M0 4.30H374.0" stroke="#111" stroke-width="1.3"/>
<path d="M0 8.60H374.0" stroke="#111" stroke-width="1.3"/>
<path d="M0 12.90H374.0" stroke="#111" stroke-width="1.3"/>
<path d="M0 17.20H374.0" stroke="#111" stroke-width="1.3"/>
<path d="M0.5 -0.5V17.7" stroke="#111" stroke-width="1.6"/>
<path d="M373.5 -0.5V17.7" stroke="#111" stroke-width="1.6"/>
<path d="M94.0 -0.5V17.7" stroke="#111" stroke-width="1.5"/>
<path d="M183.0 -0.5V17.7" stroke="#111" stroke-width="1.5"/>
<path d="M276.0 -0.5V17.7" stroke="#111" stroke-width="1.5"/>
<path d="M8 -6C13 -4 12 4 6 10C0 16 -2 20 4 22C10 24 13 18 9 14C5 10 1 14 3 17M8 -6C4 -2 9 14 9 20V28" fill="none" stroke="#111" stroke-width="1.4"/>
<path d="M13 2V16M17 0V18M12 6H19M12 10H19" stroke="#111" stroke-width="1.2"/>
<path d="M23 -4V26" stroke="#111" stroke-width="1.2"/>
<ellipse cx="34.0" cy="17.2" rx="3.7" ry="2.7" fill="#111" transform="rotate(-25 34.0 17.2)"/>
<path d="M36.8 17.2V0.2" stroke="#111" stroke-width="1.4"/>
<ellipse cx="46.0" cy="17.2" rx="3.7" ry="2.7" fill="#111" transform="rotate(-25 46.0 17.2)"/>
<path d="M48.8 17.2V0.2" stroke="#111" stroke-width="1.4"/>
<path d="M48.8 0.2q3 3 5 7" stroke="#111" stroke-width="1.2" fill="none"/>
<ellipse cx="58.0" cy="15.0" rx="3.7" ry="2.7" fill="#111" transform="rotate(-25 58.0 15.0)"/>
<path d="M60.8 15.0V-2.0" stroke="#111" stroke-width="1.4"/>
<ellipse cx="70.0" cy="12.9" rx="3.7" ry="2.7" fill="#111" transform="rotate(-25 70.0 12.9)"/>
<path d="M72.8 12.9V-4.1" stroke="#111" stroke-width="1.4"/>
<ellipse cx="82.0" cy="15.0" rx="3.7" ry="2.7" fill="#111" transform="rotate(-25 82.0 15.0)"/>
<path d="M84.8 15.0V-2.0" stroke="#111" stroke-width="1.4"/>
<path d="M84.8 -2.0q3 3 5 7" stroke="#111" stroke-width="1.2" fill="none"/>
<ellipse cx="104.8" cy="15.0" rx="3.7" ry="2.7" fill="#111" transform="rotate(-25 104.8 15.0)"/>
<path d="M107.6 15.0V-2.0" stroke="#111" stroke-width="1.4"/>
<ellipse cx="114.4" cy="15.0" rx="3.7" ry="2.7" fill="#111" transform="rotate(-25 114.4 15.0)"/>
<path d="M117.2 15.0V-2.0" stroke="#111" stroke-width="1.4"/>
<ellipse cx="124.1" cy="15.0" rx="3.7" ry="2.7" fill="#111" transform="rotate(-25 124.1 15.0)"/>
<path d="M126.9 15.0V-2.0" stroke="#111" stroke-width="1.4"/>
<ellipse cx="133.7" cy="15.0" rx="3.7" ry="2.7" fill="#111" transform="rotate(-25 133.7 15.0)"/>
<path d="M136.5 15.0V-2.0" stroke="#111" stroke-width="1.4"/>
<ellipse cx="143.3" cy="19.3" rx="3.7" ry="2.7" fill="#111" transform="rotate(-25 143.3 19.3)"/>
<path d="M146.1 19.3V2.3" stroke="#111" stroke-width="1.4"/>
<ellipse cx="152.9" cy="15.0" rx="3.7" ry="2.7" fill="#111" transform="rotate(-25 152.9 15.0)"/>
<path d="M155.7 15.0V-2.0" stroke="#111" stroke-width="1.4"/>
<ellipse cx="162.6" cy="15.0" rx="3.7" ry="2.7" fill="#111" transform="rotate(-25 162.6 15.0)"/>
<path d="M165.4 15.0V-2.0" stroke="#111" stroke-width="1.4"/>
<ellipse cx="172.2" cy="12.9" rx="3.7" ry="2.7" fill="#111" transform="rotate(-25 172.2 12.9)"/>
<path d="M175.0 12.9V-4.1" stroke="#111" stroke-width="1.4"/>
<path d="M107.6 -1.0L136.5 -2.0" stroke="#111" stroke-width="2.2"/>
<path d="M107.6 15.0V-1.0" stroke="#111" stroke-width="1.2"/>
<path d="M117.2 15.0V-1.0" stroke="#111" stroke-width="1.2"/>
<path d="M126.9 15.0V-1.0" stroke="#111" stroke-width="1.2"/>
<path d="M136.5 15.0V-1.0" stroke="#111" stroke-width="1.2"/>
<path d="M146.1 -3.1L175.0 -4.1" stroke="#111" stroke-width="2.2"/>
<path d="M146.1 19.3V-3.1" stroke="#111" stroke-width="1.2"/>
<path d="M155.7 15.0V-3.1" stroke="#111" stroke-width="1.2"/>
<path d="M165.4 15.0V-3.1" stroke="#111" stroke-width="1.2"/>
<path d="M175.0 12.9V-3.1" stroke="#111" stroke-width="1.2"/>
<ellipse cx="197.1" cy="15.0" rx="3.7" ry="2.7" fill="#111" transform="rotate(-25 197.1 15.0)"/>
<path d="M199.9 15.0V-2.0" stroke="#111" stroke-width="1.4"/>
<ellipse cx="213.3" cy="19.3" rx="3.7" ry="2.7" fill="#111" transform="rotate(-25 213.3 19.3)"/>
<path d="M216.1 19.3V2.3" stroke="#111" stroke-width="1.4"/>
<path d="M216.1 2.3q3 3 5 7" stroke="#111" stroke-width="1.2" fill="none"/>
<ellipse cx="229.5" cy="12.9" rx="3.7" ry="2.7" fill="#111" transform="rotate(-25 229.5 12.9)"/>
<path d="M232.3 12.9V-4.1" stroke="#111" stroke-width="1.4"/>
<ellipse cx="245.7" cy="15.0" rx="3.7" ry="2.7" fill="#111" transform="rotate(-25 245.7 15.0)"/>
<path d="M248.5 15.0V-2.0" stroke="#111" stroke-width="1.4"/>
<path d="M248.5 -2.0q3 3 5 7" stroke="#111" stroke-width="1.2" fill="none"/>
<ellipse cx="261.9" cy="12.9" rx="3.7" ry="2.7" fill="#111" transform="rotate(-25 261.9 12.9)"/>
<path d="M264.7 12.9V-4.1" stroke="#111" stroke-width="1.4"/>
<path d="M264.7 -4.1q3 3 5 7" stroke="#111" stroke-width="1.2" fill="none"/>
<ellipse cx="287.4" cy="15.0" rx="3.7" ry="2.7" fill="#111" transform="rotate(-25 287.4 15.0)"/>
<path d="M290.2 15.0V-2.0" stroke="#111" stroke-width="1.4"/>
<ellipse cx="298.1" cy="21.5" rx="3.7" ry="2.7" fill="#111" transform="rotate(-25 298.1 21.5)"/>
<path d="M300.9 21.5V4.5" stroke="#111" stroke-width="1.4"/>
<path d="M293.1 21.5h10" stroke="#111" stroke-width="1.2"/>
<ellipse cx="308.9" cy="17.2" rx="3.7" ry="2.7" fill="#111" transform="rotate(-25 308.9 17.2)"/>
<path d="M311.7 17.2V0.2" stroke="#111" stroke-width="1.4"/>
<ellipse cx="319.6" cy="15.0" rx="3.7" ry="2.7" fill="#111" transform="rotate(-25 319.6 15.0)"/>
<path d="M322.4 15.0V-2.0" stroke="#111" stroke-width="1.4"/>
<ellipse cx="330.4" cy="19.3" rx="3.7" ry="2.7" fill="#111" transform="rotate(-25 330.4 19.3)"/>
<path d="M333.2 19.3V2.3" stroke="#111" stroke-width="1.4"/>
<ellipse cx="341.1" cy="17.2" rx="3.7" ry="2.7" fill="#111" transform="rotate(-25 341.1 17.2)"/>
<path d="M343.9 17.2V0.2" stroke="#111" stroke-width="1.4"/>
<ellipse cx="351.9" cy="15.0" rx="3.7" ry="2.7" fill="#111" transform="rotate(-25 351.9 15.0)"/>
<path d="M354.7 15.0V-2.0" stroke="#111" stroke-width="1.4"/>
<ellipse cx="362.6" cy="15.0" rx="3.7" ry="2.7" fill="#111" transform="rotate(-25 362.6 15.0)"/>
<path d="M365.4 15.0V-2.0" stroke="#111" stroke-width="1.4"/>
<path d="M290.2 -1.0L322.4 -2.0" stroke="#111" stroke-width="2.2"/>
<path d="M290.2 15.0V-1.0" stroke="#111" stroke-width="1.2"/>
<path d="M300.9 21.5V-1.0" stroke="#111" stroke-width="1.2"/>
<path d="M311.7 17.2V-1.0" stroke="#111" stroke-width="1.2"/>
<path d="M322.4 15.0V-1.0" stroke="#111" stroke-width="1.2"/>
<path d="M333.2 -1.0L365.4 -2.0" stroke="#111" stroke-width="2.2"/>
<path d="M333.2 19.3V-1.0" stroke="#111" stroke-width="1.2"/>
<path d="M343.9 17.2V-1.0" stroke="#111" stroke-width="1.2"/>
<path d="M354.7 15.0V-1.0" stroke="#111" stroke-width="1.2"/>
<path d="M365.4 15.0V-1.0" stroke="#111" stroke-width="1.2"/>
</g>
<g transform="translate(266.0,535.3) rotate(-1.95)">
<path d="M0 0.00H374.0" stroke="#111" stroke-width="1.3"/>
<path d="M0 4.25H374.0" stroke="#111" stroke-width="1.3"/>
<path d="M0 8.50H374.0" stroke="#111" stroke-width="1.3"/>
<path d="M0 12.75H374.0" stroke="#111" stroke-width="1.3"/>
<path d="M0 17.00H374.0" stroke="#111" stroke-width="1.3"/>
<path d="M0.5 -0.5V17.5" stroke="#111" stroke-width="1.6"/>
<path d="M373.5 -0.5V17.5" stroke="#111" stroke-width="1.6"/>
<path d="M92.0 -0.5V17.5" stroke="#111" stroke-width="1.5"/>
<path d="M180.0 -0.5V17.5" stroke="#111" stroke-width="1.5"/>
<path d="M276.0 -0.5V17.5" stroke="#111" stroke-width="1.5"/>
<rect x="367.0" y="-0.5" width="5" height="18.0" fill="#111"/>
<path d="M366.0 -4Q372.0 -2 374.0 -6M366.0 21.0Q372.0 19.0 374.0 23.0" stroke="#111" stroke-width="1.3" fill="none"/>
<rect x="178.0" y="-0.5" width="4" height="18.0" fill="#111"/>
<ellipse cx="11.0" cy="12.8" rx="3.7" ry="2.7" fill="#111" transform="rotate(-25 11.0 12.8)"/>
<path d="M13.8 12.8V-4.2" stroke="#111" stroke-width="1.4"/>
<ellipse cx="21.0" cy="19.1" rx="3.7" ry="2.7" fill="#111" transform="rotate(-25 21.0 19.1)"/>
<path d="M23.8 19.1V2.1" stroke="#111" stroke-width="1.4"/>
<ellipse cx="31.0" cy="23.4" rx="3.7" ry="2.7" fill="#111" transform="rotate(-25 31.0 23.4)"/>
<path d="M33.8 23.4V6.4" stroke="#111" stroke-width="1.4"/>
<path d="M26.0 21.2h10" stroke="#111" stroke-width="1.2"/>
<ellipse cx="41.0" cy="14.9" rx="3.7" ry="2.7" fill="#111" transform="rotate(-25 41.0 14.9)"/>
<path d="M43.8 14.9V-2.1" stroke="#111" stroke-width="1.4"/>
<ellipse cx="51.0" cy="17.0" rx="3.7" ry="2.7" fill="#111" transform="rotate(-25 51.0 17.0)"/>
<path d="M53.8 17.0V0.0" stroke="#111" stroke-width="1.4"/>
<ellipse cx="61.0" cy="23.4" rx="3.7" ry="2.7" fill="#111" transform="rotate(-25 61.0 23.4)"/>
<path d="M63.8 23.4V6.4" stroke="#111" stroke-width="1.4"/>
<path d="M56.0 21.2h10" stroke="#111" stroke-width="1.2"/>
<ellipse cx="71.0" cy="23.4" rx="3.7" ry="2.7" fill="#111" transform="rotate(-25 71.0 23.4)"/>
<path d="M73.8 23.4V6.4" stroke="#111" stroke-width="1.4"/>
<path d="M66.0 21.2h10" stroke="#111" stroke-width="1.2"/>
<ellipse cx="81.0" cy="17.0" rx="3.7" ry="2.7" fill="#111" transform="rotate(-25 81.0 17.0)"/>
<path d="M83.8 17.0V0.0" stroke="#111" stroke-width="1.4"/>
<path d="M13.8 -3.2L43.8 -4.2" stroke="#111" stroke-width="2.2"/>
<path d="M13.8 12.8V-3.2" stroke="#111" stroke-width="1.2"/>
<path d="M23.8 19.1V-3.2" stroke="#111" stroke-width="1.2"/>
<path d="M33.8 23.4V-3.2" stroke="#111" stroke-width="1.2"/>
<path d="M43.8 14.9V-3.2" stroke="#111" stroke-width="1.2"/>
<path d="M53.8 1.0L83.8 0.0" stroke="#111" stroke-width="2.2"/>
<path d="M53.8 17.0V1.0" stroke="#111" stroke-width="1.2"/>
<path d="M63.8 23.4V1.0" stroke="#111" stroke-width="1.2"/>
<path d="M73.8 23.4V1.0" stroke="#111" stroke-width="1.2"/>
<path d="M83.8 17.0V1.0" stroke="#111" stroke-width="1.2"/>
<ellipse cx="104.3" cy="21.2" rx="3.7" ry="2.7" fill="#111" transform="rotate(-25 104.3 21.2)"/>
<path d="M107.1 21.2V4.2" stroke="#111" stroke-width="1.4"/>
<path d="M99.3 21.2h10" stroke="#111" stroke-width="1.2"/>
<ellipse cx="117.0" cy="19.1" rx="3.7" ry="2.7" fill="#111" transform="rotate(-25 117.0 19.1)"/>
<path d="M119.8 19.1V2.1" stroke="#111" stroke-width="1.4"/>
<ellipse cx="129.7" cy="17.0" rx="3.7" ry="2.7" fill="#111" transform="rotate(-25 129.7 17.0)"/>
<path d="M132.5 17.0V0.0" stroke="#111" stroke-width="1.4"/>
<ellipse cx="142.3" cy="19.1" rx="3.7" ry="2.7" fill="#111" transform="rotate(-25 142.3 19.1)"/>
<path d="M145.1 19.1V2.1" stroke="#111" stroke-width="1.4"/>
<ellipse cx="155.0" cy="14.9" rx="3.7" ry="2.7" fill="#111" transform="rotate(-25 155.0 14.9)"/>
<path d="M157.8 14.9V-2.1" stroke="#111" stroke-width="1.4"/>
<ellipse cx="167.7" cy="21.2" rx="3.7" ry="2.7" fill="#111" transform="rotate(-25 167.7 21.2)"/>
<path d="M170.5 21.2V4.2" stroke="#111" stroke-width="1.4"/>
<path d="M162.7 21.2h10" stroke="#111" stroke-width="1.2"/>
<path d="M107.1 1.0L132.5 0.0" stroke="#111" stroke-width="2.2"/>
<path d="M107.1 21.2V1.0" stroke="#111" stroke-width="1.2"/>
<path d="M119.8 19.1V1.0" stroke="#111" stroke-width="1.2"/>
<path d="M132.5 17.0V1.0" stroke="#111" stroke-width="1.2"/>
<path d="M145.1 -1.1L170.5 -2.1" stroke="#111" stroke-width="2.2"/>
<path d="M145.1 19.1V-1.1" stroke="#111" stroke-width="1.2"/>
<path d="M157.8 14.9V-1.1" stroke="#111" stroke-width="1.2"/>
<path d="M170.5 21.2V-1.1" stroke="#111" stroke-width="1.2"/>
<ellipse cx="207.0" cy="21.2" rx="3.8" ry="2.6" fill="none" stroke="#111" stroke-width="1.8" transform="rotate(-20 207.0 21.2)"/>
<path d="M210.0 21.2V5.2" stroke="#111" stroke-width="1.1"/>
<ellipse cx="249.0" cy="19.1" rx="3.8" ry="2.6" fill="none" stroke="#111" stroke-width="1.8" transform="rotate(-20 249.0 19.1)"/>
<path d="M252.0 19.1V3.1" stroke="#111" stroke-width="1.1"/>
<ellipse cx="325.0" cy="14.9" rx="3.8" ry="2.6" fill="none" stroke="#111" stroke-width="1.8" transform="rotate(-20 325.0 14.9)"/>
<path d="M305.0 23.0Q320.0 29.0 350.0 21.0" fill="none" stroke="#111" stroke-width="1.4"/>
</g>
<g transform="translate(265.0,586.8) rotate(-1.95)">
<path d="M0 0.00H377.0" stroke="#111" stroke-width="1.3"/>
<path d="M0 4.25H377.0" stroke="#111" stroke-width="1.3"/>
<path d="M0 8.50H377.0" stroke="#111" stroke-width="1.3"/>
<path d="M0 12.75H377.0" stroke="#111" stroke-width="1.3"/>
<path d="M0 17.00H377.0" stroke="#111" stroke-width="1.3"/>
<path d="M0.5 -0.5V17.5" stroke="#111" stroke-width="1.6"/>
<path d="M376.5 -0.5V17.5" stroke="#111" stroke-width="1.6"/>
<path d="M96.0 -0.5V17.5" stroke="#111" stroke-width="1.5"/>
<path d="M186.0 -0.5V17.5" stroke="#111" stroke-width="1.5"/>
<path d="M280.5 -0.5V17.5" stroke="#111" stroke-width="1.5"/>
<path d="M3 -0.5V17.5" stroke="#111" stroke-width="2.5"/>
<path d="M189.0 -0.5V17.5" stroke="#111" stroke-width="2.4"/>
<ellipse cx="27.0" cy="19.1" rx="3.8" ry="2.6" fill="none" stroke="#111" stroke-width="1.8" transform="rotate(-20 27.0 19.1)"/>
<path d="M30.0 19.1V3.1" stroke="#111" stroke-width="1.1"/>
<ellipse cx="69.0" cy="17.0" rx="3.8" ry="2.6" fill="none" stroke="#111" stroke-width="1.8" transform="rotate(-20 69.0 17.0)"/>
<path d="M72.0 17.0V1.0" stroke="#111" stroke-width="1.1"/>
<ellipse cx="121.5" cy="14.9" rx="3.8" ry="2.6" fill="none" stroke="#111" stroke-width="1.8" transform="rotate(-20 121.5 14.9)"/>
<path d="M124.5 14.9V-1.1" stroke="#111" stroke-width="1.1"/>
<ellipse cx="160.5" cy="14.9" rx="3.8" ry="2.6" fill="none" stroke="#111" stroke-width="1.8" transform="rotate(-20 160.5 14.9)"/>
<path d="M163.5 14.9V-1.1" stroke="#111" stroke-width="1.1"/>
<ellipse cx="233.2" cy="19.1" rx="3.8" ry="2.6" fill="none" stroke="#111" stroke-width="1.8" transform="rotate(-20 233.2 19.1)"/>
<path d="M213.2 23.0Q228.2 29.0 258.2 21.0" fill="none" stroke="#111" stroke-width="1.4"/>
<ellipse cx="293.5" cy="17.0" rx="3.7" ry="2.7" fill="#111" transform="rotate(-25 293.5 17.0)"/>
<path d="M296.3 17.0V0.0" stroke="#111" stroke-width="1.4"/>
<ellipse cx="307.6" cy="23.4" rx="3.7" ry="2.7" fill="#111" transform="rotate(-25 307.6 23.4)"/>
<path d="M310.4 23.4V6.4" stroke="#111" stroke-width="1.4"/>
<path d="M302.6 21.2h10" stroke="#111" stroke-width="1.2"/>
<ellipse cx="321.7" cy="23.4" rx="3.7" ry="2.7" fill="#111" transform="rotate(-25 321.7 23.4)"/>
<path d="M324.5 23.4V6.4" stroke="#111" stroke-width="1.4"/>
<path d="M316.7 21.2h10" stroke="#111" stroke-width="1.2"/>
<ellipse cx="335.8" cy="14.9" rx="3.7" ry="2.7" fill="#111" transform="rotate(-25 335.8 14.9)"/>
<path d="M338.6 14.9V-2.1" stroke="#111" stroke-width="1.4"/>
<ellipse cx="349.9" cy="14.9" rx="3.7" ry="2.7" fill="#111" transform="rotate(-25 349.9 14.9)"/>
<path d="M352.7 14.9V-2.1" stroke="#111" stroke-width="1.4"/>
<ellipse cx="364.0" cy="21.2" rx="3.7" ry="2.7" fill="#111" transform="rotate(-25 364.0 21.2)"/>
<path d="M366.8 21.2V4.2" stroke="#111" stroke-width="1.4"/>
<path d="M359.0 21.2h10" stroke="#111" stroke-width="1.2"/>
<path d="M293.5 -10.0v-2h4M313.1 -12.0H324.7v2" stroke="#111" stroke-width="1.2" fill="none"/>
<text x="309.1" y="-9.0" font-size="7" font-family="Liberation Sans" fill="#111" text-anchor="middle">3</text>
<path d="M335.8 -10.0v-2h4M355.4 -12.0H367.0v2" stroke="#111" stroke-width="1.2" fill="none"/>
<text x="351.4" y="-9.0" font-size="7" font-family="Liberation Sans" fill="#111" text-anchor="middle">3</text>
</g>
<g transform="translate(270.0,641.3) rotate(-1.95)">
<path d="M0 0.00H374.0" stroke="#111" stroke-width="1.3"/>
<path d="M0 4.25H374.0" stroke="#111" stroke-width="1.3"/>
<path d="M0 8.50H374.0" stroke="#111" stroke-width="1.3"/>
<path d="M0 12.75H374.0" stroke="#111" stroke-width="1.3"/>
<path d="M0 17.00H374.0" stroke="#111" stroke-width="1.3"/>
<path d="M0.5 -0.5V17.5" stroke="#111" stroke-width="1.6"/>
<path d="M373.5 -0.5V17.5" stroke="#111" stroke-width="1.6"/>
<path d="M93.0 -0.5V17.5" stroke="#111" stroke-width="1.5"/>
<path d="M184.0 -0.5V17.5" stroke="#111" stroke-width="1.5"/>
<path d="M278.0 -0.5V17.5" stroke="#111" stroke-width="1.5"/>
<ellipse cx="16.1" cy="23.4" rx="3.7" ry="2.7" fill="#111" transform="rotate(-25 16.1 23.4)"/>
<path d="M18.9 23.4V6.4" stroke="#111" stroke-width="1.4"/>
<path d="M11.1 21.2h10" stroke="#111" stroke-width="1.2"/>
<ellipse cx="36.4" cy="14.9" rx="3.7" ry="2.7" fill="#111" transform="rotate(-25 36.4 14.9)"/>
<path d="M39.2 14.9V-2.1" stroke="#111" stroke-width="1.4"/>
<ellipse cx="56.6" cy="12.8" rx="3.7" ry="2.7" fill="#111" transform="rotate(-25 56.6 12.8)"/>
<path d="M59.4 12.8V-4.2" stroke="#111" stroke-width="1.4"/>
<ellipse cx="76.9" cy="21.2" rx="3.7" ry="2.7" fill="#111" transform="rotate(-25 76.9 21.2)"/>
<path d="M79.7 21.2V4.2" stroke="#111" stroke-width="1.4"/>
<path d="M71.9 21.2h10" stroke="#111" stroke-width="1.2"/>
<path d="M79.7 4.2q3 3 5 7" stroke="#111" stroke-width="1.2" fill="none"/>
<ellipse cx="118.8" cy="14.9" rx="3.8" ry="2.6" fill="none" stroke="#111" stroke-width="1.8" transform="rotate(-20 118.8 14.9)"/>
<path d="M121.8 14.9V-1.1" stroke="#111" stroke-width="1.1"/>
<ellipse cx="158.2" cy="21.2" rx="3.8" ry="2.6" fill="none" stroke="#111" stroke-width="1.8" transform="rotate(-20 158.2 21.2)"/>
<path d="M161.2 21.2V5.2" stroke="#111" stroke-width="1.1"/>
<ellipse cx="231.0" cy="17.0" rx="3.8" ry="2.6" fill="none" stroke="#111" stroke-width="1.8" transform="rotate(-20 231.0 17.0)"/>
<path d="M211.0 23.0Q226.0 29.0 256.0 21.0" fill="none" stroke="#111" stroke-width="1.4"/>
<ellipse cx="291.0" cy="14.9" rx="3.7" ry="2.7" fill="#111" transform="rotate(-25 291.0 14.9)"/>
<path d="M293.8 14.9V-2.1" stroke="#111" stroke-width="1.4"/>
<ellipse cx="305.0" cy="23.4" rx="3.7" ry="2.7" fill="#111" transform="rotate(-25 305.0 23.4)"/>
<path d="M307.8 23.4V6.4" stroke="#111" stroke-width="1.4"/>
<path d="M300.0 21.2h10" stroke="#111" stroke-width="1.2"/>
<ellipse cx="319.0" cy="12.8" rx="3.7" ry="2.7" fill="#111" transform="rotate(-25 319.0 12.8)"/>
<path d="M321.8 12.8V-4.2" stroke="#111" stroke-width="1.4"/>
<ellipse cx="333.0" cy="19.1" rx="3.7" ry="2.7" fill="#111" transform="rotate(-25 333.0 19.1)"/>
<path d="M335.8 19.1V2.1" stroke="#111" stroke-width="1.4"/>
<ellipse cx="347.0" cy="21.2" rx="3.7" ry="2.7" fill="#111" transform="rotate(-25 347.0 21.2)"/>
<path d="M349.8 21.2V4.2" stroke="#111" stroke-width="1.4"/>
<path d="M342.0 21.2h10" stroke="#111" stroke-width="1.2"/>
<ellipse cx="361.0" cy="17.0" rx="3.7" ry="2.7" fill="#111" transform="rotate(-25 361.0 17.0)"/>
<path d="M363.8 17.0V0.0" stroke="#111" stroke-width="1.4"/>
<path d="M291.0 -10.0v-2h4M310.5 -12.0H322.0v2" stroke="#111" stroke-width="1.2" fill="none"/>
<text x="306.5" y="-9.0" font-size="7" font-family="Liberation Sans" fill="#111" text-anchor="middle">3</text>
<path d="M333.0 -10.0v-2h4M352.5 -12.0H364.0v2" stroke="#111" stroke-width="1.2" fill="none"/>
<text x="348.5" y="-9.0" font-size="7" font-family="Liberation Sans" fill="#111" text-anchor="middle">3</text>
</g>
<g transform="translate(272.0,696.9) rotate(-1.95)">
<path d="M0 0.00H373.0" stroke="#111" stroke-width="1.3"/>
<path d="M0 4.25H373.0" stroke="#111" stroke-width="1.3"/>
<path d="M0 8.50H373.0" stroke="#111" stroke-width="1.3"/>
<path d="M0 12.75H373.0" stroke="#111" stroke-width="1.3"/>
<path d="M0 17.00H373.0" stroke="#111" stroke-width="1.3"/>
<path d="M0.5 -0.5V17.5" stroke="#111" stroke-width="1.6"/>
<path d="M372.5 -0.5V17.5" stroke="#111" stroke-width="1.6"/>
<path d="M93.0 -0.5V17.5" stroke="#111" stroke-width="1.5"/>
<path d="M184.7 -0.5V17.5" stroke="#111" stroke-width="1.5"/>
<path d="M277.0 -0.5V17.5" stroke="#111" stroke-width="1.5"/>
<ellipse cx="16.1" cy="19.1" rx="3.7" ry="2.7" fill="#111" transform="rotate(-25 16.1 19.1)"/>
<path d="M18.9 19.1V2.1" stroke="#111" stroke-width="1.4"/>
<path d="M18.9 2.1q3 3 5 7" stroke="#111" stroke-width="1.2" fill="none"/>
<ellipse cx="36.4" cy="14.9" rx="3.7" ry="2.7" fill="#111" transform="rotate(-25 36.4 14.9)"/>
<path d="M39.2 14.9V-2.1" stroke="#111" stroke-width="1.4"/>
<ellipse cx="56.6" cy="14.9" rx="3.7" ry="2.7" fill="#111" transform="rotate(-25 56.6 14.9)"/>
<path d="M59.4 14.9V-2.1" stroke="#111" stroke-width="1.4"/>
<ellipse cx="76.9" cy="23.4" rx="3.7" ry="2.7" fill="#111" transform="rotate(-25 76.9 23.4)"/>
<path d="M79.7 23.4V6.4" stroke="#111" stroke-width="1.4"/>
<path d="M71.9 21.2h10" stroke="#111" stroke-width="1.2"/>
<ellipse cx="112.3" cy="19.1" rx="3.8" ry="2.6" fill="none" stroke="#111" stroke-width="1.8" transform="rotate(-20 112.3 19.1)"/>
<path d="M115.3 19.1V3.1" stroke="#111" stroke-width="1.1"/>
<ellipse cx="138.8" cy="21.2" rx="3.8" ry="2.6" fill="none" stroke="#111" stroke-width="1.8" transform="rotate(-20 138.8 21.2)"/>
<path d="M141.8 21.2V5.2" stroke="#111" stroke-width="1.1"/>
<ellipse cx="165.4" cy="17.0" rx="3.8" ry="2.6" fill="none" stroke="#111" stroke-width="1.8" transform="rotate(-20 165.4 17.0)"/>
<path d="M168.4 17.0V1.0" stroke="#111" stroke-width="1.1"/>
<ellipse cx="230.8" cy="14.9" rx="3.8" ry="2.6" fill="none" stroke="#111" stroke-width="1.8" transform="rotate(-20 230.8 14.9)"/>
<path d="M210.8 23.0Q225.8 29.0 255.8 21.0" fill="none" stroke="#111" stroke-width="1.4"/>
<ellipse cx="290.0" cy="17.0" rx="3.7" ry="2.7" fill="#111" transform="rotate(-25 290.0 17.0)"/>
<path d="M292.8 17.0V0.0" stroke="#111" stroke-width="1.4"/>
<ellipse cx="304.0" cy="17.0" rx="3.7" ry="2.7" fill="#111" transform="rotate(-25 304.0 17.0)"/>
<path d="M306.8 17.0V0.0" stroke="#111" stroke-width="1.4"/>
<ellipse cx="318.0" cy="19.1" rx="3.7" ry="2.7" fill="#111" transform="rotate(-25 318.0 19.1)"/>
<path d="M320.8 19.1V2.1" stroke="#111" stroke-width="1.4"/>
<ellipse cx="332.0" cy="19.1" rx="3.7" ry="2.7" fill="#111" transform="rotate(-25 332.0 19.1)"/>
<path d="M334.8 19.1V2.1" stroke="#111" stroke-width="1.4"/>
<ellipse cx="346.0" cy="12.8" rx="3.7" ry="2.7" fill="#111" transform="rotate(-25 346.0 12.8)"/>
<path d="M348.8 12.8V-4.2" stroke="#111" stroke-width="1.4"/>
<ellipse cx="360.0" cy="23.4" rx="3.7" ry="2.7" fill="#111" transform="rotate(-25 360.0 23.4)"/>
<path d="M362.8 23.4V6.4" stroke="#111" stroke-width="1.4"/>
<path d="M355.0 21.2h10" stroke="#111" stroke-width="1.2"/>
<path d="M290.0 -10.0v-2h4M309.5 -12.0H321.0v2" stroke="#111" stroke-width="1.2" fill="none"/>
<text x="305.5" y="-9.0" font-size="7" font-family="Liberation Sans" fill="#111" text-anchor="middle">3</text>
<path d="M332.0 -10.0v-2h4M351.5 -12.0H363.0v2" stroke="#111" stroke-width="1.2" fill="none"/>
<text x="347.5" y="-9.0" font-size="7" font-family="Liberation Sans" fill="#111" text-anchor="middle">3</text>
</g>
<g transform="translate(274.0,752.0) rotate(-1.95)">
<path d="M0 0.00H372.0" stroke="#111" stroke-width="1.3"/>
<path d="M0 4.25H372.0" stroke="#111" stroke-width="1.3"/>
<path d="M0 8.50H372.0" stroke="#111" stroke-width="1.3"/>
<path d="M0 12.75H372.0" stroke="#111" stroke-width="1.3"/>
<path d="M0 17.00H372.0" stroke="#111" stroke-width="1.3"/>
<path d="M0.5 -0.5V17.5" stroke="#111" stroke-width="1.6"/>
<path d="M371.5 -0.5V17.5" stroke="#111" stroke-width="1.6"/>
<path d="M93.6 -0.5V17.5" stroke="#111" stroke-width="1.5"/>
<path d="M185.0 -0.5V17.5" stroke="#111" stroke-width="1.5"/>
<path d="M277.5 -0.5V17.5" stroke="#111" stroke-width="1.5"/>
<ellipse cx="19.6" cy="17.0" rx="3.7" ry="2.7" fill="#111" transform="rotate(-25 19.6 17.0)"/>
<path d="M22.4 17.0V0.0" stroke="#111" stroke-width="1.4"/>
<path d="M22.4 0.0q3 3 5 7" stroke="#111" stroke-width="1.2" fill="none"/>
<ellipse cx="46.8" cy="21.2" rx="3.7" ry="2.7" fill="#111" transform="rotate(-25 46.8 21.2)"/>
<path d="M49.6 21.2V4.2" stroke="#111" stroke-width="1.4"/>
<path d="M41.8 21.2h10" stroke="#111" stroke-width="1.2"/>
<ellipse cx="74.0" cy="21.2" rx="3.7" ry="2.7" fill="#111" transform="rotate(-25 74.0 21.2)"/>
<path d="M76.8 21.2V4.2" stroke="#111" stroke-width="1.4"/>
<path d="M69.0 21.2h10" stroke="#111" stroke-width="1.2"/>
<path d="M76.8 4.2q3 3 5 7" stroke="#111" stroke-width="1.2" fill="none"/>
<ellipse cx="112.8" cy="21.2" rx="3.8" ry="2.6" fill="none" stroke="#111" stroke-width="1.8" transform="rotate(-20 112.8 21.2)"/>
<path d="M115.8 21.2V5.2" stroke="#111" stroke-width="1.1"/>
<ellipse cx="139.3" cy="21.2" rx="3.8" ry="2.6" fill="none" stroke="#111" stroke-width="1.8" transform="rotate(-20 139.3 21.2)"/>
<path d="M142.3 21.2V5.2" stroke="#111" stroke-width="1.1"/>
<ellipse cx="165.8" cy="21.2" rx="3.8" ry="2.6" fill="none" stroke="#111" stroke-width="1.8" transform="rotate(-20 165.8 21.2)"/>
<path d="M168.8 21.2V5.2" stroke="#111" stroke-width="1.1"/>
<ellipse cx="197.7" cy="14.9" rx="3.7" ry="2.7" fill="#111" transform="rotate(-25 197.7 14.9)"/>
<path d="M200.5 14.9V-2.1" stroke="#111" stroke-width="1.4"/>
<ellipse cx="211.1" cy="14.9" rx="3.7" ry="2.7" fill="#111" transform="rotate(-25 211.1 14.9)"/>
<path d="M213.9 14.9V-2.1" stroke="#111" stroke-width="1.4"/>
<ellipse cx="224.5" cy="14.9" rx="3.7" ry="2.7" fill="#111" transform="rotate(-25 224.5 14.9)"/>
<path d="M227.3 14.9V-2.1" stroke="#111" stroke-width="1.4"/>
<ellipse cx="238.0" cy="23.4" rx="3.7" ry="2.7" fill="#111" transform="rotate(-25 238.0 23.4)"/>
<path d="M240.8 23.4V6.4" stroke="#111" stroke-width="1.4"/>
<path d="M233.0 21.2h10" stroke="#111" stroke-width="1.2"/>
<ellipse cx="251.4" cy="14.9" rx="3.7" ry="2.7" fill="#111" transform="rotate(-25 251.4 14.9)"/>
<path d="M254.2 14.9V-2.1" stroke="#111" stroke-width="1.4"/>
<ellipse cx="264.8" cy="12.8" rx="3.7" ry="2.7" fill="#111" transform="rotate(-25 264.8 12.8)"/>
<path d="M267.6 12.8V-4.2" stroke="#111" stroke-width="1.4"/>
<path d="M197.7 -10.0v-2h4M216.6 -12.0H227.5v2" stroke="#111" stroke-width="1.2" fill="none"/>
<text x="212.6" y="-9.0" font-size="7" font-family="Liberation Sans" fill="#111" text-anchor="middle">3</text>
<path d="M238.0 -10.0v-2h4M256.9 -12.0H267.8v2" stroke="#111" stroke-width="1.2" fill="none"/>
<text x="252.9" y="-9.0" font-size="7" font-family="Liberation Sans" fill="#111" text-anchor="middle">3</text>
<ellipse cx="304.1" cy="17.0" rx="3.8" ry="2.6" fill="none" stroke="#111" stroke-width="1.8" transform="rotate(-20 304.1 17.0)"/>
<ellipse cx="345.4" cy="21.2" rx="3.8" ry="2.6" fill="none" stroke="#111" stroke-width="1.8" transform="rotate(-20 345.4 21.2)"/>
<path d="M325.4 23.0Q340.4 29.0 370.4 21.0" fill="none" stroke="#111" stroke-width="1.4"/>
</g>
<g transform="translate(276.0,806.2) rotate(-1.95)">
<path d="M0 0.00H370.0" stroke="#111" stroke-width="1.3"/>
<path d="M0 4.25H370.0" stroke="#111" stroke-width="1.3"/>
<path d="M0 8.50H370.0" stroke="#111" stroke-width="1.3"/>
<path d="M0 12.75H370.0" stroke="#111" stroke-width="1.3"/>
<path d="M0 17.00H370.0" stroke="#111" stroke-width="1.3"/>
<path d="M0.5 -0.5V17.5" stroke="#111" stroke-width="1.6"/>
<path d="M369.5 -0.5V17.5" stroke="#111" stroke-width="1.6"/>
<path d="M91.6 -0.5V17.5" stroke="#111" stroke-width="1.5"/>
<path d="M184.0 -0.5V17.5" stroke="#111" stroke-width="1.5"/>
<rect x="182.0" y="-0.5" width="4.5" height="18.0" fill="#111"/>
<ellipse cx="12.6" cy="17.0" rx="3.7" ry="2.7" fill="#111" transform="rotate(-25 12.6 17.0)"/>
<path d="M15.4 17.0V0.0" stroke="#111" stroke-width="1.4"/>
<ellipse cx="25.9" cy="14.9" rx="3.7" ry="2.7" fill="#111" transform="rotate(-25 25.9 14.9)"/>
<path d="M28.7 14.9V-2.1" stroke="#111" stroke-width="1.4"/>
<ellipse cx="39.2" cy="17.0" rx="3.7" ry="2.7" fill="#111" transform="rotate(-25 39.2 17.0)"/>
<path d="M42.0 17.0V0.0" stroke="#111" stroke-width="1.4"/>
<ellipse cx="52.4" cy="12.8" rx="3.7" ry="2.7" fill="#111" transform="rotate(-25 52.4 12.8)"/>
<path d="M55.2 12.8V-4.2" stroke="#111" stroke-width="1.4"/>
<ellipse cx="65.7" cy="14.9" rx="3.7" ry="2.7" fill="#111" transform="rotate(-25 65.7 14.9)"/>
<path d="M68.5 14.9V-2.1" stroke="#111" stroke-width="1.4"/>
<ellipse cx="79.0" cy="12.8" rx="3.7" ry="2.7" fill="#111" transform="rotate(-25 79.0 12.8)"/>
<path d="M81.8 12.8V-4.2" stroke="#111" stroke-width="1.4"/>
<path d="M12.6 -10.0v-2h4M31.4 -12.0H42.2v2" stroke="#111" stroke-width="1.2" fill="none"/>
<text x="27.4" y="-9.0" font-size="7" font-family="Liberation Sans" fill="#111" text-anchor="middle">3</text>
<path d="M52.4 -10.0v-2h4M71.2 -12.0H82.0v2" stroke="#111" stroke-width="1.2" fill="none"/>
<text x="67.2" y="-9.0" font-size="7" font-family="Liberation Sans" fill="#111" text-anchor="middle">3</text>
<ellipse cx="137.8" cy="14.9" rx="3.8" ry="2.6" fill="none" stroke="#111" stroke-width="1.8" transform="rotate(-20 137.8 14.9)"/>
<path d="M117.8 23.0Q132.8 29.0 162.8 21.0" fill="none" stroke="#111" stroke-width="1.4"/>
<ellipse cx="196.2" cy="17.0" rx="3.7" ry="2.7" fill="#111" transform="rotate(-25 196.2 17.0)"/>
<path d="M199.0 17.0V0.0" stroke="#111" stroke-width="1.4"/>
<ellipse cx="208.6" cy="12.8" rx="3.7" ry="2.7" fill="#111" transform="rotate(-25 208.6 12.8)"/>
<path d="M211.4 12.8V-4.2" stroke="#111" stroke-width="1.4"/>
<ellipse cx="221.1" cy="14.9" rx="3.7" ry="2.7" fill="#111" transform="rotate(-25 221.1 14.9)"/>
<path d="M223.9 14.9V-2.1" stroke="#111" stroke-width="1.4"/>
<ellipse cx="233.5" cy="19.1" rx="3.7" ry="2.7" fill="#111" transform="rotate(-25 233.5 19.1)"/>
<path d="M236.3 19.1V2.1" stroke="#111" stroke-width="1.4"/>
<ellipse cx="245.9" cy="14.9" rx="3.7" ry="2.7" fill="#111" transform="rotate(-25 245.9 14.9)"/>
<path d="M248.7 14.9V-2.1" stroke="#111" stroke-width="1.4"/>
<ellipse cx="258.4" cy="17.0" rx="3.7" ry="2.7" fill="#111" transform="rotate(-25 258.4 17.0)"/>
<path d="M261.2 17.0V0.0" stroke="#111" stroke-width="1.4"/>
<ellipse cx="270.8" cy="21.2" rx="3.7" ry="2.7" fill="#111" transform="rotate(-25 270.8 21.2)"/>
<path d="M273.6 21.2V4.2" stroke="#111" stroke-width="1.4"/>
<path d="M265.8 21.2h10" stroke="#111" stroke-width="1.2"/>
<ellipse cx="283.2" cy="17.0" rx="3.7" ry="2.7" fill="#111" transform="rotate(-25 283.2 17.0)"/>
<path d="M286.0 17.0V0.0" stroke="#111" stroke-width="1.4"/>
<ellipse cx="295.6" cy="17.0" rx="3.7" ry="2.7" fill="#111" transform="rotate(-25 295.6 17.0)"/>
<path d="M298.4 17.0V0.0" stroke="#111" stroke-width="1.4"/>
<ellipse cx="308.1" cy="23.4" rx="3.7" ry="2.7" fill="#111" transform="rotate(-25 308.1 23.4)"/>
<path d="M310.9 23.4V6.4" stroke="#111" stroke-width="1.4"/>
<path d="M303.1 21.2h10" stroke="#111" stroke-width="1.2"/>
<ellipse cx="320.5" cy="14.9" rx="3.7" ry="2.7" fill="#111" transform="rotate(-25 320.5 14.9)"/>
<path d="M323.3 14.9V-2.1" stroke="#111" stroke-width="1.4"/>
<ellipse cx="332.9" cy="14.9" rx="3.7" ry="2.7" fill="#111" transform="rotate(-25 332.9 14.9)"/>
<path d="M335.7 14.9V-2.1" stroke="#111" stroke-width="1.4"/>
<ellipse cx="345.4" cy="23.4" rx="3.7" ry="2.7" fill="#111" transform="rotate(-25 345.4 23.4)"/>
<path d="M348.2 23.4V6.4" stroke="#111" stroke-width="1.4"/>
<path d="M340.4 21.2h10" stroke="#111" stroke-width="1.2"/>
<ellipse cx="357.8" cy="23.4" rx="3.7" ry="2.7" fill="#111" transform="rotate(-25 357.8 23.4)"/>
<path d="M360.6 23.4V6.4" stroke="#111" stroke-width="1.4"/>
<path d="M352.8 21.2h10" stroke="#111" stroke-width="1.2"/>
<path d="M199.0 -3.2L236.3 -4.2" stroke="#111" stroke-width="2.2"/>
<path d="M199.0 17.0V-3.2" stroke="#111" stroke-width="1.2"/>
<path d="M211.4 12.8V-3.2" stroke="#111" stroke-width="1.2"/>
<path d="M223.9 14.9V-3.2" stroke="#111" stroke-width="1.2"/>
<path d="M236.3 19.1V-3.2" stroke="#111" stroke-width="1.2"/>
<path d="M248.7 -1.1L286.0 -2.1" stroke="#111" stroke-width="2.2"/>
<path d="M248.7 14.9V-1.1" stroke="#111" stroke-width="1.2"/>
<path d="M261.2 17.0V-1.1" stroke="#111" stroke-width="1.2"/>
<path d="M273.6 21.2V-1.1" stroke="#111" stroke-width="1.2"/>
<path d="M286.0 17.0V-1.1" stroke="#111" stroke-width="1.2"/>
<path d="M298.4 -1.1L335.7 -2.1" stroke="#111" stroke-width="2.2"/>
<path d="M298.4 17.0V-1.1" stroke="#111" stroke-width="1.2"/>
<path d="M310.9 23.4V-1.1" stroke="#111" stroke-width="1.2"/>
<path d="M323.3 14.9V-1.1" stroke="#111" stroke-width="1.2"/>
<path d="M335.7 14.9V-1.1" stroke="#111" stroke-width="1.2"/>
<path d="M348.2 7.4L360.6 6.4" stroke="#111" stroke-width="2.2"/>
<path d="M348.2 23.4V7.4" stroke="#111" stroke-width="1.2"/>
<path d="M360.6 23.4V7.4" stroke="#111" stroke-width="1.2"/>
</g>
<g transform="translate(275.0,862.6) rotate(-1.95)">
<path d="M0 0.00H371.0" stroke="#111" stroke-width="1.3"/>
<path d="M0 4.25H371.0" stroke="#111" stroke-width="1.3"/>
<path d="M0 8.50H371.0" stroke="#111" stroke-width="1.3"/>
<path d="M0 12.75H371.0" stroke="#111" stroke-width="1.3"/>
<path d="M0 17.00H371.0" stroke="#111" stroke-width="1.3"/>
<path d="M0.5 -0.5V17.5" stroke="#111" stroke-width="1.6"/>
<path d="M370.5 -0.5V17.5" stroke="#111" stroke-width="1.6"/>
<path d="M96.0 -0.5V17.5" stroke="#111" stroke-width="1.5"/>
<path d="M189.6 -0.5V17.5" stroke="#111" stroke-width="1.5"/>
<path d="M282.0 -0.5V17.5" stroke="#111" stroke-width="1.5"/>
<ellipse cx="13.0" cy="23.4" rx="3.7" ry="2.7" fill="#111" transform="rotate(-25 13.0 23.4)"/>
<path d="M15.8 23.4V6.4" stroke="#111" stroke-width="1.4"/>
<path d="M8.0 21.2h10" stroke="#111" stroke-width="1.2"/>
<ellipse cx="27.0" cy="23.4" rx="3.7" ry="2.7" fill="#111" transform="rotate(-25 27.0 23.4)"/>
<path d="M29.8 23.4V6.4" stroke="#111" stroke-width="1.4"/>
<path d="M22.0 21.2h10" stroke="#111" stroke-width="1.2"/>
<ellipse cx="41.0" cy="21.2" rx="3.7" ry="2.7" fill="#111" transform="rotate(-25 41.0 21.2)"/>
<path d="M43.8 21.2V4.2" stroke="#111" stroke-width="1.4"/>
<path d="M36.0 21.2h10" stroke="#111" stroke-width="1.2"/>
<ellipse cx="55.0" cy="14.9" rx="3.7" ry="2.7" fill="#111" transform="rotate(-25 55.0 14.9)"/>
<path d="M57.8 14.9V-2.1" stroke="#111" stroke-width="1.4"/>
<ellipse cx="69.0" cy="17.0" rx="3.7" ry="2.7" fill="#111" transform="rotate(-25 69.0 17.0)"/>
<path d="M71.8 17.0V0.0" stroke="#111" stroke-width="1.4"/>
<ellipse cx="83.0" cy="14.9" rx="3.7" ry="2.7" fill="#111" transform="rotate(-25 83.0 14.9)"/>
<path d="M85.8 14.9V-2.1" stroke="#111" stroke-width="1.4"/>
<path d="M15.8 5.2L43.8 4.2" stroke="#111" stroke-width="2.2"/>
<path d="M15.8 23.4V5.2" stroke="#111" stroke-width="1.2"/>
<path d="M29.8 23.4V5.2" stroke="#111" stroke-width="1.2"/>
<path d="M43.8 21.2V5.2" stroke="#111" stroke-width="1.2"/>
<path d="M57.8 -1.1L85.8 -2.1" stroke="#111" stroke-width="2.2"/>
<path d="M57.8 14.9V-1.1" stroke="#111" stroke-width="1.2"/>
<path d="M71.8 17.0V-1.1" stroke="#111" stroke-width="1.2"/>
<path d="M85.8 14.9V-1.1" stroke="#111" stroke-width="1.2"/>
<ellipse cx="107.1" cy="17.0" rx="3.7" ry="2.7" fill="#111" transform="rotate(-25 107.1 17.0)"/>
<path d="M109.9 17.0V0.0" stroke="#111" stroke-width="1.4"/>
<ellipse cx="117.3" cy="21.2" rx="3.7" ry="2.7" fill="#111" transform="rotate(-25 117.3 21.2)"/>
<path d="M120.1 21.2V4.2" stroke="#111" stroke-width="1.4"/>
<path d="M112.3 21.2h10" stroke="#111" stroke-width="1.2"/>
<ellipse cx="127.5" cy="23.4" rx="3.7" ry="2.7" fill="#111" transform="rotate(-25 127.5 23.4)"/>
<path d="M130.3 23.4V6.4" stroke="#111" stroke-width="1.4"/>
<path d="M122.5 21.2h10" stroke="#111" stroke-width="1.2"/>
<ellipse cx="137.7" cy="17.0" rx="3.7" ry="2.7" fill="#111" transform="rotate(-25 137.7 17.0)"/>
<path d="M140.5 17.0V0.0" stroke="#111" stroke-width="1.4"/>
<ellipse cx="147.9" cy="12.8" rx="3.7" ry="2.7" fill="#111" transform="rotate(-25 147.9 12.8)"/>
<path d="M150.7 12.8V-4.2" stroke="#111" stroke-width="1.4"/>
<ellipse cx="158.1" cy="19.1" rx="3.7" ry="2.7" fill="#111" transform="rotate(-25 158.1 19.1)"/>
<path d="M160.9 19.1V2.1" stroke="#111" stroke-width="1.4"/>
<ellipse cx="168.3" cy="17.0" rx="3.7" ry="2.7" fill="#111" transform="rotate(-25 168.3 17.0)"/>
<path d="M171.1 17.0V0.0" stroke="#111" stroke-width="1.4"/>
<ellipse cx="178.5" cy="17.0" rx="3.7" ry="2.7" fill="#111" transform="rotate(-25 178.5 17.0)"/>
<path d="M181.3 17.0V0.0" stroke="#111" stroke-width="1.4"/>
<path d="M109.9 1.0L140.5 0.0" stroke="#111" stroke-width="2.2"/>
<path d="M109.9 17.0V1.0" stroke="#111" stroke-width="1.2"/>
<path d="M120.1 21.2V1.0" stroke="#111" stroke-width="1.2"/>
<path d="M130.3 23.4V1.0" stroke="#111" stroke-width="1.2"/>
<path d="M140.5 17.0V1.0" stroke="#111" stroke-width="1.2"/>
<path d="M150.7 -3.2L181.3 -4.2" stroke="#111" stroke-width="2.2"/>
<path d="M150.7 12.8V-3.2" stroke="#111" stroke-width="1.2"/>
<path d="M160.9 19.1V-3.2" stroke="#111" stroke-width="1.2"/>
<path d="M171.1 17.0V-3.2" stroke="#111" stroke-width="1.2"/>
<path d="M181.3 17.0V-3.2" stroke="#111" stroke-width="1.2"/>
<ellipse cx="202.3" cy="12.8" rx="3.7" ry="2.7" fill="#111" transform="rotate(-25 202.3 12.8)"/>
<path d="M205.1 12.8V-4.2" stroke="#111" stroke-width="1.4"/>
<ellipse cx="215.7" cy="21.2" rx="3.7" ry="2.7" fill="#111" transform="rotate(-25 215.7 21.2)"/>
<path d="M218.5 21.2V4.2" stroke="#111" stroke-width="1.4"/>
<path d="M210.7 21.2h10" stroke="#111" stroke-width="1.2"/>
<ellipse cx="229.1" cy="14.9" rx="3.7" ry="2.7" fill="#111" transform="rotate(-25 229.1 14.9)"/>
<path d="M231.9 14.9V-2.1" stroke="#111" stroke-width="1.4"/>
<ellipse cx="242.5" cy="21.2" rx="3.7" ry="2.7" fill="#111" transform="rotate(-25 242.5 21.2)"/>
<path d="M245.3 21.2V4.2" stroke="#111" stroke-width="1.4"/>
<path d="M237.5 21.2h10" stroke="#111" stroke-width="1.2"/>
<ellipse cx="255.9" cy="17.0" rx="3.7" ry="2.7" fill="#111" transform="rotate(-25 255.9 17.0)"/>
<path d="M258.7 17.0V0.0" stroke="#111" stroke-width="1.4"/>
<ellipse cx="269.3" cy="17.0" rx="3.7" ry="2.7" fill="#111" transform="rotate(-25 269.3 17.0)"/>
<path d="M272.1 17.0V0.0" stroke="#111" stroke-width="1.4"/>
<path d="M205.1 -3.2L231.9 -4.2" stroke="#111" stroke-width="2.2"/>
<path d="M205.1 12.8V-3.2" stroke="#111" stroke-width="1.2"/>
<path d="M218.5 21.2V-3.2" stroke="#111" stroke-width="1.2"/>
<path d="M231.9 14.9V-3.2" stroke="#111" stroke-width="1.2"/>
<path d="M245.3 1.0L272.1 0.0" stroke="#111" stroke-width="2.2"/>
<path d="M245.3 21.2V1.0" stroke="#111" stroke-width="1.2"/>
<path d="M258.7 17.0V1.0" stroke="#111" stroke-width="1.2"/>
<path d="M272.1 17.0V1.0" stroke="#111" stroke-width="1.2"/>
<ellipse cx="295.7" cy="17.0" rx="3.7" ry="2.7" fill="#111" transform="rotate(-25 295.7 17.0)"/>
<path d="M298.5 17.0V0.0" stroke="#111" stroke-width="1.4"/>
<ellipse cx="311.1" cy="19.1" rx="3.7" ry="2.7" fill="#111" transform="rotate(-25 311.1 19.1)"/>
<path d="M313.9 19.1V2.1" stroke="#111" stroke-width="1.4"/>
<ellipse cx="326.5" cy="17.0" rx="3.7" ry="2.7" fill="#111" transform="rotate(-25 326.5 17.0)"/>
<path d="M329.3 17.0V0.0" stroke="#111" stroke-width="1.4"/>
<ellipse cx="341.9" cy="19.1" rx="3.7" ry="2.7" fill="#111" transform="rotate(-25 341.9 19.1)"/>
<path d="M344.7 19.1V2.1" stroke="#111" stroke-width="1.4"/>
<ellipse cx="357.3" cy="19.1" rx="3.7" ry="2.7" fill="#111" transform="rotate(-25 357.3 19.1)"/>
<path d="M360.1 19.1V2.1" stroke="#111" stroke-width="1.4"/>
<path d="M298.5 1.0L360.1 0.0" stroke="#111" stroke-width="2.2"/>
<path d="M298.5 17.0V1.0" stroke="#111" stroke-width="1.2"/>
<path d="M313.9 19.1V1.0" stroke="#111" stroke-width="1.2"/>
<path d="M329.3 17.0V1.0" stroke="#111" stroke-width="1.2"/>
<path d="M344.7 19.1V1.0" stroke="#111" stroke-width="1.2"/>
<path d="M360.1 19.1V1.0" stroke="#111" stroke-width="1.2"/>
</g>
<g transform="translate(281.0,918.0) rotate(-1.95)">
<path d="M0 0.00H365.0" stroke="#111" stroke-width="1.3"/>
<path d="M0 4.25H365.0" stroke="#111" stroke-width="1.3"/>
<path d="M0 8.50H365.0" stroke="#111" stroke-width="1.3"/>
<path d="M0 12.75H365.0" stroke="#111" stroke-width="1.3"/>
<path d="M0 17.00H365.0" stroke="#111" stroke-width="1.3"/>
<path d="M0.5 -0.5V17.5" stroke="#111" stroke-width="1.6"/>
<path d="M364.5 -0.5V17.5" stroke="#111" stroke-width="1.6"/>
<path d="M93.0 -0.5V17.5" stroke="#111" stroke-width="1.5"/>
<path d="M184.7 -0.5V17.5" stroke="#111" stroke-width="1.5"/>
<rect x="182.7" y="-0.5" width="4.5" height="18.0" fill="#111"/>
<ellipse cx="46.5" cy="21.2" rx="3.8" ry="2.6" fill="none" stroke="#111" stroke-width="1.8" transform="rotate(-20 46.5 21.2)"/>
<path d="M26.5 23.0Q41.5 29.0 71.5 21.0" fill="none" stroke="#111" stroke-width="1.4"/>
<ellipse cx="112.3" cy="19.1" rx="3.8" ry="2.6" fill="none" stroke="#111" stroke-width="1.8" transform="rotate(-20 112.3 19.1)"/>
<path d="M115.3 19.1V3.1" stroke="#111" stroke-width="1.1"/>
<ellipse cx="138.8" cy="14.9" rx="3.8" ry="2.6" fill="none" stroke="#111" stroke-width="1.8" transform="rotate(-20 138.8 14.9)"/>
<path d="M141.8 14.9V-1.1" stroke="#111" stroke-width="1.1"/>
<ellipse cx="165.4" cy="14.9" rx="3.8" ry="2.6" fill="none" stroke="#111" stroke-width="1.8" transform="rotate(-20 165.4 14.9)"/>
<path d="M168.4 14.9V-1.1" stroke="#111" stroke-width="1.1"/>
</g>
<path d="M240 442.0h6" stroke="#666" stroke-width="1.2"/><path d="M240 470.4h6" stroke="#666" stroke-width="1.2"/><path d="M240 498.7h6" stroke="#666" stroke-width="1.2"/><path d="M240 527.0h6" stroke="#666" stroke-width="1.2"/><path d="M240 555.4h6" stroke="#666" stroke-width="1.2"/><path d="M240 583.8h6" stroke="#666" stroke-width="1.2"/><path d="M240 612.1h6" stroke="#666" stroke-width="1.2"/><path d="M240 640.5h6" stroke="#666" stroke-width="1.2"/><path d="M240 668.8h6" stroke="#666" stroke-width="1.2"/><path d="M240 697.1h6" stroke="#666" stroke-width="1.2"/><path d="M240 725.5h6" stroke="#666" stroke-width="1.2"/><path d="M240 753.9h6" stroke="#666" stroke-width="1.2"/><path d="M240 782.2h6" stroke="#666" stroke-width="1.2"/><path d="M240 810.5h6" stroke="#666" stroke-width="1.2"/><path d="M240 838.9h6" stroke="#666" stroke-width="1.2"/><path d="M240 867.2h6" stroke="#666" stroke-width="1.2"/><path d="M240 895.6h6" stroke="#666" stroke-width="1.2"/><path d="M240 924.0h6" stroke="#666" stroke-width="1.2"/><path d="M240 952.3h6" stroke="#666" stroke-width="1.2"/>
<text x="331" y="444" font-family="Liberation Sans" font-size="20" font-weight="bold" fill="#111" transform="rotate(-1.5 331 444)" textLength="212" lengthAdjust="spacingAndGlyphs" style="letter-spacing:0">THE GIRL&#160; FROM IPANEMA</text>
<path d="M327 449L563 443" stroke="#111" stroke-width="2.4"/>
<text x="592" y="436" font-family="Liberation Sans" font-size="8" font-weight="bold" fill="#111" >—JOBIM</text>
<text x="610" y="451" font-family="Liberation Sans" font-size="11" font-weight="normal" fill="#111" font-style="italic">/7/.</text>
<text x="248" y="456" font-family="Liberation Sans" font-size="6" font-weight="bold" fill="#111" transform="rotate(-20 248 456)">BOSSA</text>
<path d="M270 434Q276 445 272 462" stroke="#111" stroke-width="1.2" fill="none"/>
<text x="0" y="0" font-family="Liberation Sans" font-size="10.5" fill="#111" transform="translate(283 466) rotate(-4) skewX(-8)" letter-spacing="0.8" stroke="#111" stroke-width="0.3">Fmaj7</text>
<path d="M392 452l3 1.5M390 458l12-7" stroke="#111" stroke-width="1.6" fill="none"/><circle cx="404" cy="459" r="0.9" fill="#111"/>
<text x="0" y="0" font-family="Liberation Sans" font-size="10.5" fill="#111" transform="translate(461 460) rotate(-4) skewX(-8)" letter-spacing="0.8" stroke="#111" stroke-width="0.3">G7</text>
<path d="M578 449l3 1.5M576 455l12-7" stroke="#111" stroke-width="1.6" fill="none"/><circle cx="590" cy="456" r="0.9" fill="#111"/>
<text x="0" y="0" font-family="Liberation Sans" font-size="10.5" fill="#111" transform="translate(272 521) rotate(-4) skewX(-8)" letter-spacing="0.8" stroke="#111" stroke-width="0.3">G-7</text>
<text x="0" y="0" font-family="Liberation Sans" font-size="10.5" fill="#111" transform="translate(367 520) rotate(-4) skewX(-8)" letter-spacing="0.8" stroke="#111" stroke-width="0.3">Gb7</text>
<text x="0" y="0" font-family="Liberation Sans" font-size="10.5" fill="#111" transform="translate(448 517) rotate(-4) skewX(-8)" letter-spacing="0.8" stroke="#111" stroke-width="0.3">1. Fmaj7</text>
<text x="0" y="0" font-family="Liberation Sans" font-size="10.5" fill="#111" transform="translate(552 513) rotate(-4) skewX(-8)" letter-spacing="0.8" stroke="#111" stroke-width="0.3">Gb7</text>
<text x="0" y="0" font-family="Liberation Sans" font-size="10.5" fill="#111" transform="translate(258 581) rotate(-4) skewX(-8)" letter-spacing="0.8" stroke="#111" stroke-width="0.3">2. Fmaj7</text>
<path d="M394 565l3 1.5M392 571l12-7" stroke="#111" stroke-width="1.6" fill="none"/><circle cx="406" cy="572" r="0.9" fill="#111"/>
<text x="0" y="0" font-family="Liberation Sans" font-size="10.5" fill="#111" transform="translate(461 568) rotate(-4) skewX(-8)" letter-spacing="0.8" stroke="#111" stroke-width="0.3">Gbmaj7</text>
<path d="M585 554l3 1.5M583 560l12-7" stroke="#111" stroke-width="1.6" fill="none"/><circle cx="597" cy="561" r="0.9" fill="#111"/>
<text x="0" y="0" font-family="Liberation Sans" font-size="10.5" fill="#111" transform="translate(274 632) rotate(-4) skewX(-8)" letter-spacing="0.8" stroke="#111" stroke-width="0.3">B7</text>
<text x="0" y="0" font-family="Liberation Sans" font-size="10.5" fill="#111" transform="translate(463 627) rotate(-4) skewX(-8)" letter-spacing="0.8" stroke="#111" stroke-width="0.3">F#-7</text>
<path d="M596 606l3 1.5M594 612l12-7" stroke="#111" stroke-width="1.6" fill="none"/><circle cx="608" cy="613" r="0.9" fill="#111"/>
<text x="0" y="0" font-family="Liberation Sans" font-size="10.5" fill="#111" transform="translate(276 688) rotate(-4) skewX(-8)" letter-spacing="0.8" stroke="#111" stroke-width="0.3">D7</text>
<path d="M396 670l3 1.5M394 676l12-7" stroke="#111" stroke-width="1.6" fill="none"/><circle cx="408" cy="677" r="0.9" fill="#111"/>
<text x="0" y="0" font-family="Liberation Sans" font-size="10.5" fill="#111" transform="translate(467 675) rotate(-4) skewX(-8)" letter-spacing="0.8" stroke="#111" stroke-width="0.3">G-7</text>
<text x="0" y="0" font-family="Liberation Sans" font-size="10.5" fill="#111" transform="translate(279 744) rotate(-4) skewX(-8)" letter-spacing="0.8" stroke="#111" stroke-width="0.3">Eb7</text>
<path d="M401 726l3 1.5M399 732l12-7" stroke="#111" stroke-width="1.6" fill="none"/><circle cx="413" cy="733" r="0.9" fill="#111"/>
<text x="0" y="0" font-family="Liberation Sans" font-size="10.5" fill="#111" transform="translate(470 731) rotate(-4) skewX(-8)" letter-spacing="0.8" stroke="#111" stroke-width="0.3">A-7</text>
<text x="0" y="0" font-family="Liberation Sans" font-size="10.5" fill="#111" transform="translate(560 724) rotate(-4) skewX(-8)" letter-spacing="0.8" stroke="#111" stroke-width="0.3">Db9</text>
<text x="0" y="0" font-family="Liberation Sans" font-size="10.5" fill="#111" transform="translate(283 797) rotate(-4) skewX(-8)" letter-spacing="0.8" stroke="#111" stroke-width="0.3">G-7</text>
<text x="0" y="0" font-family="Liberation Sans" font-size="10.5" fill="#111" transform="translate(382 788) rotate(-4) skewX(-8)" letter-spacing="0.8" stroke="#111" stroke-width="0.3">Cmb9</text>
<text x="0" y="0" font-family="Liberation Sans" font-size="10.5" fill="#111" transform="translate(472 788) rotate(-4) skewX(-8)" letter-spacing="0.8" stroke="#111" stroke-width="0.3">Fmaj7</text>
<path d="M596 774l3 1.5M594 780l12-7" stroke="#111" stroke-width="1.6" fill="none"/><circle cx="608" cy="781" r="0.9" fill="#111"/>
<text x="0" y="0" font-family="Liberation Sans" font-size="10.5" fill="#111" transform="translate(286 853) rotate(-4) skewX(-8)" letter-spacing="0.8" stroke="#111" stroke-width="0.3">G7</text>
<path d="M405 840l3 1.5M403 846l12-7" stroke="#111" stroke-width="1.6" fill="none"/><circle cx="417" cy="847" r="0.9" fill="#111"/>
<text x="0" y="0" font-family="Liberation Sans" font-size="10.5" fill="#111" transform="translate(476 845) rotate(-4) skewX(-8)" letter-spacing="0.8" stroke="#111" stroke-width="0.3">G-7</text>
<text x="0" y="0" font-family="Liberation Sans" font-size="10.5" fill="#111" transform="translate(570 840) rotate(-4) skewX(-8)" letter-spacing="0.8" stroke="#111" stroke-width="0.3">Gb7</text>
<text x="0" y="0" font-family="Liberation Sans" font-size="10.5" fill="#111" transform="translate(285 907) rotate(-4) skewX(-8)" letter-spacing="0.8" stroke="#111" stroke-width="0.3">Fmaj7</text>
<text x="0" y="0" font-family="Liberation Sans" font-size="10.5" fill="#111" transform="translate(381 902) rotate(-4) skewX(-8)" letter-spacing="0.8" stroke="#111" stroke-width="0.3">(Gb7)</text>
<path d="M443 522V502L542 497" stroke="#111" stroke-width="1.2" fill="none"/>
<path d="M256 587V567L303 564" stroke="#111" stroke-width="1.2" fill="none"/>
<text x="305" y="960" font-family="Liberation Sans" font-size="7.5" font-weight="bold" fill="#111" transform="rotate(-1.5 305 960)" textLength="165" lengthAdjust="spacingAndGlyphs">ANTONIO CARLOS JOBIM — "GETZ/GILBERTO"</text>
<text x="495" y="951" font-family="Liberation Sans" font-size="8" font-weight="normal" fill="#111" transform="rotate(-1.5 495 951)" textLength="150" lengthAdjust="spacingAndGlyphs">"The Composer of Desafinado, PM</text>
</g><!--/SHEET-->
   <path d="M1356 859L1368.6 871L1361.2 871.6L1356.3 876.2Z" fill="#000" stroke="#000" stroke-width="0.6" stroke-linejoin="round"/>
  </svg>
  </div>
  <div class="a" id="vscroll">
    <svg style="left:4px;top:5px" width="10" height="7" fill="none" stroke="#9a9a9a" stroke-width="1.3"><path d="M1 6l4-4 4 4"/></svg>
    <div class="a" style="left:3px;top:517px;width:13px;height:28px;border-radius:7px;background:#5e5e5e"></div>
    <svg style="left:4px;top:1001px" width="10" height="7" fill="none" stroke="#9a9a9a" stroke-width="1.3"><path d="M1 1l4 4 4-4"/></svg>
  </div>
  <div class="a" id="status">
    <div class="a" style="left:5px;top:1px;width:60px;height:18px;background:#3f3f3f"></div>
    <span class="a" style="left:9px;top:3px;font-size:12px;color:#e8e8e8">14,92%</span>
    <div class="a" style="left:60px;top:1px;width:18px;height:18px;background:#484848"></div>
    <svg style="left:65px;top:8px" width="9" height="6" viewBox="0 0 9 6" fill="none" stroke="#e0e0e0" stroke-width="1.4"><path d="M1 1l3.5 3.5L8 1"/></svg>
    <div class="a" style="left:80px;top:1px;width:60px;height:18px;background:#3f3f3f"></div>
    <span class="a" style="left:89px;top:3px;font-size:12px;color:#e8e8e8">0°</span>
    <svg style="left:146px;top:8px" width="9" height="6" viewBox="0 0 9 6" fill="none" stroke="#e0e0e0" stroke-width="1.4"><path d="M1 1l3.5 3.5L8 1"/></svg>
    <svg style="left:170px;top:3px" width="40" height="14" fill="#6a6a6a"><rect x="2" y="2" width="1.6" height="10"/><path d="M12 2L5 7l7 5z"/><path d="M30 2l-7 5 7 5z"/></svg>
    <div class="a" style="left:207px;top:1px;width:50px;height:18px;background:#3f3f3f"></div>
    <span class="a" style="left:211px;top:3px;font-size:12px;color:#e8e8e8">1</span>
    <svg style="left:257px;top:8px" width="9" height="6" viewBox="0 0 9 6" fill="none" stroke="#e0e0e0" stroke-width="1.4"><path d="M1 1l3.5 3.5L8 1"/></svg>
    <svg style="left:278px;top:3px" width="40" height="14" fill="#6a6a6a"><path d="M5 2l7 5-7 5z"/><path d="M19 2l7 5-7 5z"/><rect x="27" y="2" width="1.6" height="10"/></svg>
    <div class="a" style="left:302px;top:0px;width:1px;height:20px;background:#3a3a3a"></div>
    <span class="a" style="left:385px;top:3px;font-size:12.5px;color:#dcdcdc">Toggle Selection</span>
    <svg style="left:547px;top:4px" width="8" height="12" fill="#e0e0e0"><path d="M1 1l6 5-6 5z"/></svg>
    <div class="a" style="left:560px;top:0px;width:1px;height:20px;background:#3a3a3a"></div>
    <svg style="left:567px;top:5px" width="7" height="10" fill="none" stroke="#aaa" stroke-width="1.3"><path d="M6 1L2 5l4 4"/></svg>
    <div class="a" style="left:1038px;top:3px;width:28px;height:14px;border-radius:7px;background:#5e5e5e"></div>
    <svg style="left:1487px;top:5px" width="7" height="10" fill="none" stroke="#bbb" stroke-width="1.3"><path d="M1 1l4 4-4 4"/></svg>
  </div>
  <div class="a" id="tools"><svg style="left:0;top:-118px" width="80" height="1241"><g transform="translate(13,156.8)"><path d="M3 1L17 10 10 11.5 6 17Z" fill="none" stroke="#d2d2d2" stroke-width="1.5" stroke-linejoin="round"/></g>
<g transform="translate(47,156.8)"><path d="M3 1L17 10 10 11.5 6 17Z" fill="#d2d2d2"/><path d="M24.5 17.5V21H21Z" fill="#d2d2d2"/></g>
<g transform="translate(13,183.6)"><path d="M3 18L13 8" stroke="#d2d2d2" stroke-width="2.2"/><path d="M6 2v4M4 4h4M14 1v3M12.5 2.5h3M17 6v3M15.5 7.5h3" stroke="#d2d2d2" stroke-width="1.1"/></g>
<g transform="translate(47,183.6)"><path d="M9 5C2 4 1 10 5 12c3 1 4-1 2-3M8 6c5-4 11-1 9 3" fill="none" stroke="#d2d2d2" stroke-width="1.2"/><path d="M8 7L18 13 13 14 10 19Z" fill="#d2d2d2"/></g>
<g transform="translate(13,210.3)"><path d="M12 3l5 5-3 2-6 7-6 1 1-6 7-6z" fill="#d2d2d2"/><path d="M4 17l5-5" stroke="#535353" stroke-width="1.2"/><rect x="12" y="1" width="5" height="4" transform="rotate(45 14.5 3)" fill="#d2d2d2"/><path d="M24.5 17.5V21H21Z" fill="#d2d2d2"/></g>
<g transform="translate(47,210.3)"><g transform="translate(2,0)"><path d="M12 3l5 5-3 2-6 7-6 1 1-6 7-6z" fill="#d2d2d2"/><path d="M4 17l5-5" stroke="#535353" stroke-width="1.2"/><rect x="12" y="1" width="5" height="4" transform="rotate(45 14.5 3)" fill="#d2d2d2"/></g><path d="M8 2C4 3 6 8 3 10s-1 7 2 7" fill="none" stroke="#d2d2d2" stroke-width="1"/><path d="M24.5 17.5V21H21Z" fill="#d2d2d2"/></g>
<g transform="translate(13,236.5)"><path d="M3 3h14v4M3 3v4M10 3v14M7 17h6" fill="none" stroke="#d2d2d2" stroke-width="2.2"/><path d="M24.5 17.5V21H21Z" fill="#d2d2d2"/></g>
<g transform="translate(47,236.5)"><path d="M3 17L17 3" stroke="#d2d2d2" stroke-width="1.5"/><path d="M24.5 17.5V21H21Z" fill="#d2d2d2"/></g>
<g transform="translate(13,262.8)"><rect x="2" y="2.5" width="16" height="15" fill="#6a6a6a" stroke="#d2d2d2" stroke-width="1.5"/><path d="M24.5 17.5V21H21Z" fill="#d2d2d2"/></g>
<g transform="translate(47,262.8)"><path d="M17 1l-7 10 3 2z" fill="#d2d2d2"/><path d="M9 12c-3 0-5 2-5 6 3 0 7-1 8-4z" fill="#d2d2d2"/><path d="M24.5 17.5V21H21Z" fill="#d2d2d2"/></g>
<g transform="translate(13,290)"><path d="M9 15A6 6 0 1 1 13 7" fill="#777" stroke="#d2d2d2" stroke-width="1.4"/><path d="M18 4L8 16l-1 3 3-1L19 6z" fill="#d2d2d2"/><path d="M24.5 17.5V21H21Z" fill="#d2d2d2"/></g>
<g transform="translate(47,290)"><circle cx="15" cy="4" r="2.6" fill="none" stroke="#d2d2d2" stroke-width="1.4"/><circle cx="15" cy="16" r="2.6" fill="none" stroke="#d2d2d2" stroke-width="1.4"/><path d="M2 7l11 7M2 13l11-7" stroke="#d2d2d2" stroke-width="1.6"/><path d="M24.5 17.5V21H21Z" fill="#d2d2d2"/></g>
<g transform="translate(13,315.8)"><path d="M4 8a7 7 0 1 1 2 9" fill="none" stroke="#d2d2d2" stroke-width="1.5" stroke-dasharray="1.5 1.5"/><path d="M4 8a7 7 0 0 1 12-1" fill="none" stroke="#d2d2d2" stroke-width="1.8"/><path d="M1 5l4 5 3-5z" fill="#d2d2d2"/><path d="M24.5 17.5V21H21Z" fill="#d2d2d2"/></g>
<g transform="translate(47,315.8)"><rect x="2" y="9" width="9" height="9" fill="none" stroke="#d2d2d2" stroke-width="1.3"/><rect x="7" y="2" width="11" height="10" fill="none" stroke="#d2d2d2" stroke-width="1.3"/><path d="M11 8l5-4M13 4h3v3" fill="none" stroke="#d2d2d2" stroke-width="1.2"/><path d="M24.5 17.5V21H21Z" fill="#d2d2d2"/></g>
<g transform="translate(13,342)"><path d="M3 6c3-3 5 0 4 3s3 6 6 3 5 0 4 3" fill="none" stroke="#d2d2d2" stroke-width="2"/><path d="M4 16l11-10" stroke="#d2d2d2" stroke-width="1"/><circle cx="4" cy="16" r="1.5" fill="none" stroke="#d2d2d2"/><circle cx="10" cy="11" r="1.5" fill="none" stroke="#d2d2d2"/><path d="M24.5 17.5V21H21Z" fill="#d2d2d2"/></g>
<g transform="translate(47,342)"><path d="M2 2l9 6-5 1-2 5z" fill="#d2d2d2"/><rect x="8" y="4" width="10" height="12" fill="none" stroke="#d2d2d2" stroke-width="1.3" stroke-dasharray="2 1"/><path d="M24.5 17.5V21H21Z" fill="#d2d2d2"/></g>
<g transform="translate(13,369.3)"><circle cx="8" cy="8" r="6" fill="none" stroke="#d2d2d2" stroke-width="1.3"/><path d="M5 8h1M8 8h1M11 8h1" stroke="#d2d2d2" stroke-width="1.2"/><path d="M10 9l8 5-4 1-2 4z" fill="#d2d2d2"/><path d="M24.5 17.5V21H21Z" fill="#d2d2d2"/></g>
<g transform="translate(47,369.3)"><path d="M2 1v17h17M2 1l9 5v12M2 6l9 3M2 11l9 1M6 3v15" fill="none" stroke="#d2d2d2" stroke-width="1.1"/><path d="M11 13h7M11 16h7" stroke="#d2d2d2" stroke-width="1"/><path d="M24.5 17.5V21H21Z" fill="#d2d2d2"/></g>
<g transform="translate(13,396.5)"><rect x="2" y="2" width="16" height="16" fill="none" stroke="#d2d2d2" stroke-width="1.4"/><path d="M2 9c5-3 9 2 16-2M2 14c6-3 10 1 16-1M8 2c-2 6 3 10 1 16M13 2c-1 5 2 9 0 16" fill="none" stroke="#d2d2d2" stroke-width="1.1"/></g>
<g transform="translate(47,396.5)"><defs><linearGradient id="tg" x1="0" x2="1"><stop offset="0" stop-color="#222"/><stop offset="1" stop-color="#eee"/></linearGradient></defs><rect x="2" y="2" width="16" height="16" fill="url(#tg)" stroke="#d2d2d2" stroke-width="1.2"/></g>
<g transform="translate(13,423)"><path d="M4 18l-1-1 9-9 2 2-9 9z" fill="none" stroke="#d2d2d2" stroke-width="1.3"/><path d="M11 7l4-4a2 2 0 0 1 3 3l-4 4z" fill="#d2d2d2"/><path d="M24.5 17.5V21H21Z" fill="#d2d2d2"/></g>
<g transform="translate(47,423)"><rect x="1" y="2" width="7" height="7" fill="#d2d2d2"/><circle cx="10" cy="10" r="5" fill="#888" stroke="#d2d2d2"/><circle cx="15" cy="14" r="4.5" fill="#535353" stroke="#d2d2d2" stroke-width="1.3"/></g>
<g transform="translate(13,449.6)"><path d="M1 4h1M4 4h1M7 4h1M1 7h1M4 7h1M1 10h1" stroke="#d2d2d2" stroke-width="1.5"/><rect x="9" y="7" width="9" height="12" rx="1" fill="none" stroke="#d2d2d2" stroke-width="1.3"/><rect x="11" y="4" width="4" height="3" fill="#d2d2d2"/><circle cx="13.5" cy="13" r="2" fill="none" stroke="#d2d2d2" stroke-width="1.3"/><path d="M24.5 17.5V21H21Z" fill="#d2d2d2"/></g>
<g transform="translate(47,449.6)"><path d="M2 2v16h17" fill="none" stroke="#d2d2d2" stroke-width="1.4"/><rect x="5" y="10" width="3" height="8" fill="#d2d2d2"/><rect x="10" y="4" width="3" height="14" fill="#d2d2d2"/><rect x="15" y="7" width="3" height="11" fill="#d2d2d2"/><path d="M24.5 17.5V21H21Z" fill="#d2d2d2"/></g>
<g transform="translate(13,475.8)"><path d="M4 1v6M1 4h6" stroke="#d2d2d2" stroke-width="1.2"/><path d="M6 7h8l4 4v8H6z" fill="#6a6a6a" stroke="#d2d2d2" stroke-width="1.3"/></g>
<g transform="translate(47,475.8)"><path d="M2 18l4-10 8-6 4 4-6 8z" fill="none" stroke="#d2d2d2" stroke-width="1.3"/><path d="M14 2l4 4-3 2-3-3z" fill="#d2d2d2"/><path d="M24.5 17.5V21H21Z" fill="#d2d2d2"/></g>
<rect x="41" y="500.5" width="31" height="26" rx="2" fill="#2c2c2c"/>
<g transform="translate(13,502.4)"><path d="M5 18c-2-2-4-6-3-8 1-1 2 0 3 2V4a1.2 1.2 0 0 1 2.4 0v6V2a1.2 1.2 0 0 1 2.4 0v8V3a1.2 1.2 0 0 1 2.4 0v7V5a1.2 1.2 0 0 1 2.4 0v8c0 3-1 5-3 6z" fill="#d2d2d2"/><path d="M24.5 17.5V21H21Z" fill="#d2d2d2"/></g>
<g transform="translate(47,502.4)"><circle cx="8.5" cy="8.5" r="6" fill="none" stroke="#d2d2d2" stroke-width="1.6"/><path d="M13 13l5 5" stroke="#d2d2d2" stroke-width="2"/></g>
<rect x="27" y="554" width="39" height="40" fill="#fff" stroke="#222" stroke-width="1"/>
<rect x="37" y="565" width="19" height="19" fill="#535353" stroke="#222" stroke-width="1"/>
<path d="M28 593L65 555" stroke="#e0201c" stroke-width="2.2"/>
<rect x="7.5" y="535" width="38" height="38" fill="#fff" stroke="#222" stroke-width="1"/>
<path d="M57 537c4 0 6 2 6 6M55 539l2-3 2 3M61 541l2 3 2-3" fill="none" stroke="#d2d2d2" stroke-width="1.5"/>
<rect x="7" y="580" width="8" height="8" fill="#fff" stroke="#111" stroke-width="1.2"/><rect x="11" y="584" width="8" height="8" fill="#111" stroke="#fff" stroke-width="1"/>
<rect x="8" y="603" width="19" height="19" fill="#3a3a3a"/>
<rect x="10.5" y="606" width="13" height="13" fill="#fff" stroke="#111" stroke-width="1.2"/>
<defs><linearGradient id="tg2" x1="0" x2="1"><stop offset="0" stop-color="#fff"/><stop offset="1" stop-color="#222"/></linearGradient></defs><rect x="32.5" y="606" width="13" height="13" fill="url(#tg2)" stroke="#111" stroke-width="1.2"/>
<rect x="54.5" y="606" width="13" height="13" fill="#fff" stroke="#111" stroke-width="1.2"/><path d="M55 619L68 606" stroke="#e0201c" stroke-width="2"/>
<rect x="8" y="630" width="19" height="19" fill="#3a3a3a"/>
<circle cx="16" cy="638" r="4" fill="#999" stroke="#d2d2d2" stroke-width="1"/><rect x="16" y="638" width="6" height="6" fill="#d2d2d2"/>
<circle cx="38" cy="638" r="4" fill="#999" stroke="#aaa" stroke-width="1"/><rect x="38" y="638" width="6" height="6" fill="#aaa"/>
<circle cx="61" cy="639" r="4.5" fill="none" stroke="#6a6a6a" stroke-width="1.5"/>
<rect x="30" y="631" width="47" height="18" fill="none" stroke="#4c4c4c" stroke-width="1"/>
<rect x="28" y="663" width="12" height="10" fill="#888" stroke="#d2d2d2" stroke-width="1.2"/><rect x="36" y="659" width="16" height="11" fill="#888" stroke="#d2d2d2" stroke-width="1.2"/>
<circle cx="34" cy="703" r="1.8" fill="#d2d2d2"/><circle cx="40" cy="703" r="1.8" fill="#d2d2d2"/><circle cx="46" cy="703" r="1.8" fill="#d2d2d2"/>
<rect x="0" y="118" width="80" height="13" fill="#484848"/>
<path d="M10 122l-3 3 3 3M14 122l-3 3 3 3" fill="none" stroke="#bbb" stroke-width="1"/>
<path d="M29.5 135v4M31.5 135v4M33.5 135v4M35.5 135v4M37.5 135v4M39.5 135v4M41.5 135v4M43.5 135v4M45.5 135v4M47.5 135v4M49.5 135v4" stroke="#333" stroke-width="1"/></svg></div>
  <div class="a" id="toolsep"></div>
  <div class="a" style="left:0;top:0;width:1px;height:1142px;background:#333;z-index:5"></div>
  <div class="a" id="rp" style="left:1600px;top:77px;width:320px;height:1065px;overflow:hidden"><svg style="left:-1600px;top:-118px" width="1920" height="1241"><rect x="1600" y="118" width="48" height="1065" fill="#484848"/>
<rect x="1600" y="118" width="3" height="1065" fill="#3a3a3a"/>
<rect x="1644.5" y="118" width="3.5" height="1065" fill="#3a3a3a"/>
<path d="M1632 122l-3 3 3 3M1636 122l-3 3 3 3" fill="none" stroke="#bbb" stroke-width="1"/>
<rect x="1603.5" y="132" width="41" height="75.5" fill="#535353" stroke="#404040" stroke-width="1"/>
<path d="M1614.5 136.5v4M1616.5 136.5v4M1618.5 136.5v4M1620.5 136.5v4M1622.5 136.5v4M1624.5 136.5v4M1626.5 136.5v4M1628.5 136.5v4M1630.5 136.5v4M1632.5 136.5v4M1634.5 136.5v4" stroke="#3a3a3a" stroke-width="1"/>
<rect x="1603.5" y="208.5" width="41" height="106.5" fill="#535353" stroke="#404040" stroke-width="1"/>
<path d="M1614.5 213.0v4M1616.5 213.0v4M1618.5 213.0v4M1620.5 213.0v4M1622.5 213.0v4M1624.5 213.0v4M1626.5 213.0v4M1628.5 213.0v4M1630.5 213.0v4M1632.5 213.0v4M1634.5 213.0v4" stroke="#3a3a3a" stroke-width="1"/>
<rect x="1603.5" y="316" width="41" height="76.5" fill="#535353" stroke="#404040" stroke-width="1"/>
<path d="M1614.5 320.5v4M1616.5 320.5v4M1618.5 320.5v4M1620.5 320.5v4M1622.5 320.5v4M1624.5 320.5v4M1626.5 320.5v4M1628.5 320.5v4M1630.5 320.5v4M1632.5 320.5v4M1634.5 320.5v4" stroke="#3a3a3a" stroke-width="1"/>
<rect x="1603.5" y="393.5" width="41" height="37.5" fill="#535353" stroke="#404040" stroke-width="1"/>
<path d="M1614.5 398.0v4M1616.5 398.0v4M1618.5 398.0v4M1620.5 398.0v4M1622.5 398.0v4M1624.5 398.0v4M1626.5 398.0v4M1628.5 398.0v4M1630.5 398.0v4M1632.5 398.0v4M1634.5 398.0v4" stroke="#3a3a3a" stroke-width="1"/>
<rect x="1603.5" y="432" width="41" height="114" fill="#535353" stroke="#404040" stroke-width="1"/>
<path d="M1614.5 436.5v4M1616.5 436.5v4M1618.5 436.5v4M1620.5 436.5v4M1622.5 436.5v4M1624.5 436.5v4M1626.5 436.5v4M1628.5 436.5v4M1630.5 436.5v4M1632.5 436.5v4M1634.5 436.5v4" stroke="#3a3a3a" stroke-width="1"/>
<rect x="1603.5" y="547" width="41" height="44" fill="#535353" stroke="#404040" stroke-width="1"/>
<path d="M1614.5 551.5v4M1616.5 551.5v4M1618.5 551.5v4M1620.5 551.5v4M1622.5 551.5v4M1624.5 551.5v4M1626.5 551.5v4M1628.5 551.5v4M1630.5 551.5v4M1632.5 551.5v4M1634.5 551.5v4" stroke="#3a3a3a" stroke-width="1"/>
<rect x="1603.5" y="592" width="41" height="45.5" fill="#535353" stroke="#404040" stroke-width="1"/>
<path d="M1614.5 596.5v4M1616.5 596.5v4M1618.5 596.5v4M1620.5 596.5v4M1622.5 596.5v4M1624.5 596.5v4M1626.5 596.5v4M1628.5 596.5v4M1630.5 596.5v4M1632.5 596.5v4M1634.5 596.5v4" stroke="#3a3a3a" stroke-width="1"/>
<g transform="translate(1614,147.8)"><path d="M10 2C4 2 1 6 1 10s3 7 7 7 3-3 6-3 5-1 5-4-3-8-9-8z" fill="#d6d6d6"/><circle cx="6" cy="11" r="1.6" fill="#535353"/><circle cx="9" cy="14" r="1.5" fill="#535353"/><circle cx="13" cy="13" r="1.5" fill="#535353"/><circle cx="16" cy="10" r="1.4" fill="#535353"/><circle cx="15" cy="6" r="1.4" fill="#535353"/></g>
<g transform="translate(1614,179)"><defs><linearGradient id="cg" x1="0" x2="1" y1="0" y2="1"><stop offset="0" stop-color="#111"/><stop offset="1" stop-color="#eee"/></linearGradient></defs><path d="M3 2A16 16 0 0 1 18 18H3Z" fill="url(#cg)" stroke="#d6d6d6" stroke-width="1.2"/></g>
<g transform="translate(1614,224.5)"><rect x="2" y="4" width="17" height="12" fill="#d6d6d6"/><rect x="4" y="6" width="3.5" height="3" fill="#777"/><rect x="13" y="6" width="3.5" height="3" fill="#777"/><rect x="4" y="11" width="3.5" height="3" fill="#777"/><rect x="8.5" y="11" width="3.5" height="3" fill="#777"/><rect x="13" y="11" width="3.5" height="3" fill="#777"/></g>
<g transform="translate(1614,254)"><rect x="5" y="12" width="10" height="7" fill="#d6d6d6"/><path d="M8 12L5 5M10 12V2M12 12l4-6" stroke="#d6d6d6" stroke-width="1.6"/><circle cx="5" cy="5" r="2.2" fill="#d6d6d6"/><circle cx="16" cy="6" r="2.2" fill="#d6d6d6"/><circle cx="10" cy="2.5" r="1.6" fill="#d6d6d6"/></g>
<g transform="translate(1614,287)"><circle cx="10" cy="5.5" r="4" fill="#d6d6d6"/><circle cx="5.5" cy="11" r="4" fill="#d6d6d6"/><circle cx="14.5" cy="11" r="4" fill="#d6d6d6"/><path d="M10 9v9M6 18h8" stroke="#d6d6d6" stroke-width="1.6"/></g>
<g transform="translate(1614,333.8)"><defs><linearGradient id="cg2" x1="0" x2="1"><stop offset="0" stop-color="#222"/><stop offset="1" stop-color="#eee"/></linearGradient></defs><rect x="2" y="4" width="17" height="12" fill="url(#cg2)" stroke="#d6d6d6" stroke-width="1.2"/></g>
<g transform="translate(1614,363.8)"><circle cx="8" cy="8" r="6" fill="#d6d6d6"/><circle cx="12" cy="12" r="6" fill="#8a8a8a" stroke="#d6d6d6" stroke-width="1.2"/></g>
<g transform="translate(1614,408.8)"><rect x="7" y="2" width="12" height="12" fill="none" stroke="#d6d6d6" stroke-width="1.3"/><rect x="2" y="9" width="7" height="7" fill="none" stroke="#d6d6d6" stroke-width="1.3"/><rect x="4" y="11" width="5" height="5" fill="none" stroke="#d6d6d6" stroke-width="1"/></g>
<g transform="translate(1614,455)"><path d="M10 2l8 5-8 5-8-5z" fill="#d6d6d6"/><path d="M2 11l8 5 8-5" fill="none" stroke="#d6d6d6" stroke-width="2"/></g>
<g transform="translate(1614,486)"><path d="M9 3H3v15h15v-6" fill="none" stroke="#d6d6d6" stroke-width="1.6"/><path d="M10 11l8-8M12 3h6v6" fill="none" stroke="#d6d6d6" stroke-width="1.6"/></g>
<g transform="translate(1614,516)"><rect x="2" y="2" width="11" height="10" fill="none" stroke="#d6d6d6" stroke-width="1.4"/><rect x="6" y="8" width="12" height="10" fill="#535353" stroke="#d6d6d6" stroke-width="1.4"/></g>
<g transform="translate(1614,562.5)"><rect x="3" y="3" width="14" height="14" fill="none" stroke="#d6d6d6" stroke-width="1.2" stroke-dasharray="2 1.5"/><rect x="1.5" y="1.5" width="3" height="3" fill="#d6d6d6"/><rect x="15.5" y="1.5" width="3" height="3" fill="#d6d6d6"/><rect x="1.5" y="15.5" width="3" height="3" fill="#d6d6d6"/><rect x="15.5" y="15.5" width="3" height="3" fill="#d6d6d6"/><circle cx="10" cy="10" r="1" fill="#d6d6d6"/></g>
<g transform="translate(1614,608.8)"><circle cx="10" cy="10" r="7" fill="#d6d6d6"/><path d="M5 4a8 8 0 0 1 11 2M16 14a8 8 0 0 1-11 2" fill="none" stroke="#d6d6d6" stroke-width="1.2"/><circle cx="16" cy="10" r="1.5" fill="#535353" stroke="#d6d6d6"/><circle cx="9" cy="18" r="1.5" fill="#535353" stroke="#d6d6d6"/></g>
<rect x="1648" y="118" width="272" height="1065" fill="#535353"/>
<rect x="1648" y="118" width="272" height="13" fill="#474747"/>
<path d="M1903 122l3 3-3 3M1907 122l3 3-3 3" fill="none" stroke="#bbb" stroke-width="1"/>
<rect x="1917" y="118" width="3" height="1065" fill="#3c3c3c"/>
<rect x="1648" y="131.5" width="269" height="30.5" fill="#454545"/>
<rect x="1648" y="131.5" width="77.59999999999991" height="30.5" fill="#535353"/>
<text stroke="#f4f4f4" stroke-width="0.4" x="1658" y="151.25" font-family="Liberation Sans" font-size="12" font-weight="bold" fill="#f4f4f4">Pathfinder</text>
<path d="M1901 142.75h12M1901 146.75h12M1901 150.75h12" stroke="#cfcfcf" stroke-width="1.4"/>
<rect x="1648" y="281.5" width="269" height="4" fill="#3e3e3e"/>
<rect x="1648" y="285.5" width="269" height="29.5" fill="#454545"/>
<rect x="1648" y="285.5" width="55.59999999999991" height="29.5" fill="#535353"/>
<path d="M1656 298.75l2.5-3 2.5 3M1656 301.75l2.5 3 2.5-3" fill="none" stroke="#aaa" stroke-width="1"/>
<text stroke="#f4f4f4" stroke-width="0.4" x="1667" y="304.75" font-family="Liberation Sans" font-size="12" font-weight="bold" fill="#f4f4f4">Align</text>
<path d="M1901 296.25h12M1901 300.25h12M1901 304.25h12" stroke="#cfcfcf" stroke-width="1.4"/>
<rect x="1648" y="507" width="269" height="4" fill="#3e3e3e"/>
<rect x="1648" y="511" width="269" height="30" fill="#454545"/>
<rect x="1648" y="511" width="87" height="30" fill="#484848"/>
<text stroke="#c8c8c8" stroke-width="0.4" x="1658" y="530.5" font-family="Liberation Sans" font-size="12.5" font-weight="normal" fill="#c8c8c8">Appearance</text>
<rect x="1736" y="511" width="61.59999999999991" height="30" fill="#535353"/>
<path d="M1744 524.5l2.5-3 2.5 3M1744 527.5l2.5 3 2.5-3" fill="none" stroke="#aaa" stroke-width="1"/>
<text stroke="#f4f4f4" stroke-width="0.4" x="1755" y="530.5" font-family="Liberation Sans" font-size="12" font-weight="bold" fill="#f4f4f4">Stroke</text>
<path d="M1901 522.0h12M1901 526.0h12M1901 530.0h12" stroke="#cfcfcf" stroke-width="1.4"/>
<rect x="1648" y="541" width="269" height="3" fill="#404040"/>
<text stroke="#e2e2e2" stroke-width="0.4" x="1653.4" y="181.6" font-family="Liberation Sans" font-size="12" fill="#e2e2e2">Shape Modes:</text>
<text stroke="#e2e2e2" stroke-width="0.4" x="1653.4" y="238" font-family="Liberation Sans" font-size="12" fill="#e2e2e2">Pathfinders:</text>
<text stroke="#e2e2e2" stroke-width="0.4" x="1653.4" y="335.1" font-family="Liberation Sans" font-size="12" fill="#e2e2e2">Align Objects:</text>
<text stroke="#e2e2e2" stroke-width="0.4" x="1653.4" y="400" font-family="Liberation Sans" font-size="12" fill="#e2e2e2">Distribute Objects:</text>
<text stroke="#e2e2e2" stroke-width="0.4" x="1653.4" y="464.7" font-family="Liberation Sans" font-size="12" fill="#e2e2e2">Distribute Spacing:</text>
<text stroke="#e2e2e2" stroke-width="0.4" x="1816" y="464.7" font-family="Liberation Sans" font-size="12" fill="#e2e2e2">Align To:</text>
<path d="M1652 379.5H1912M1652 444.5H1912" stroke="#4d4d4d" stroke-width="1"/>
<path d="M1802.5 452V505" stroke="#4d4d4d" stroke-width="1"/>
<g transform="translate(1659,196.5)"><rect x="2" y="2" width="10" height="10" fill="#d6d6d6"/><rect x="6" y="6" width="10" height="10" fill="#d6d6d6"/></g>
<g transform="translate(1701,196.5)"><rect x="2" y="2" width="10" height="10" fill="#d6d6d6"/><rect x="6.5" y="6.5" width="9.5" height="9.5" fill="#535353" stroke="#d6d6d6" stroke-width="1.3"/></g>
<g transform="translate(1743,196.5)"><rect x="2" y="2" width="10" height="10" fill="none" stroke="#d6d6d6" stroke-width="1.3"/><rect x="6" y="6" width="10" height="10" fill="none" stroke="#d6d6d6" stroke-width="1.3"/><rect x="6" y="6" width="6" height="6" fill="#d6d6d6"/></g>
<g transform="translate(1785.5,196.5)"><rect x="2" y="2" width="10" height="10" fill="#d6d6d6"/><rect x="6" y="6" width="10" height="10" fill="#d6d6d6"/><rect x="6.5" y="6.5" width="5" height="5" fill="#535353"/></g>
<rect x="1822" y="195" width="86" height="20.5" fill="#4e4e4e" stroke="#4a4a4a"/>
<text stroke="#888" stroke-width="0.4" x="1865" y="209.5" font-family="Liberation Sans" font-size="12" fill="#888" text-anchor="middle">Expand</text>
<g transform="translate(1663.2,253)"><rect x="2" y="2" width="10" height="10" fill="none" stroke="#d6d6d6" stroke-width="1.5"/><rect x="6" y="6" width="10" height="10" fill="#d6d6d6"/><rect x="6" y="6" width="6" height="6" fill="#999"/></g>
<g transform="translate(1706.7,253)"><rect x="2" y="2" width="10" height="10" fill="#d6d6d6"/><rect x="6" y="6" width="10" height="10" fill="#d6d6d6" stroke="#535353" stroke-width="1"/></g>
<g transform="translate(1750,253)"><rect x="2" y="2" width="10" height="10" fill="#d6d6d6"/><rect x="6" y="6" width="10" height="10" fill="#d6d6d6"/></g>
<g transform="translate(1793,253)"><rect x="2" y="2" width="10" height="10" fill="none" stroke="#999" stroke-width="1.3"/><rect x="6" y="6" width="10" height="10" fill="none" stroke="#d6d6d6" stroke-width="1.3"/><rect x="6" y="6" width="6" height="6" fill="#d6d6d6"/></g>
<g transform="translate(1836.5,253)"><rect x="2" y="2" width="10" height="10" fill="none" stroke="#d6d6d6" stroke-width="1.3"/><rect x="6" y="6" width="10" height="10" fill="none" stroke="#d6d6d6" stroke-width="1.3"/><rect x="6" y="6" width="6" height="6" fill="none" stroke="#d6d6d6" stroke-width="1"/></g>
<g transform="translate(1880,253)"><rect x="6" y="6" width="10" height="10" fill="#d6d6d6"/><rect x="2" y="2" width="10" height="10" fill="#535353" stroke="#d6d6d6" stroke-width="1.3"/></g>
<g transform="translate(1658,349.3)"><path d="M2 1v17" stroke="#d6d6d6" stroke-width="1.2"/><rect x="4" y="3" width="7" height="5" fill="#d6d6d6"/><rect x="4" y="10" width="12" height="5" fill="#d6d6d6"/></g>
<g transform="translate(1698.3,349.3)"><path d="M9 1v17" stroke="#d6d6d6" stroke-width="1.2"/><rect x="5.5" y="3" width="7" height="5" fill="#d6d6d6"/><rect x="3" y="10" width="12" height="5" fill="#d6d6d6"/></g>
<g transform="translate(1739.3,349.3)"><path d="M16 1v17" stroke="#d6d6d6" stroke-width="1.2"/><rect x="7" y="3" width="7" height="5" fill="#d6d6d6"/><rect x="2" y="10" width="12" height="5" fill="#d6d6d6"/></g>
<g transform="translate(1809.9,349.3)"><path d="M0 2h19" stroke="#d6d6d6" stroke-width="1.2"/><rect x="3" y="4" width="5" height="13" fill="#d6d6d6"/><rect x="10" y="4" width="5" height="7" fill="#d6d6d6"/></g>
<g transform="translate(1850,349.3)"><path d="M0 9h19" stroke="#d6d6d6" stroke-width="1.2"/><rect x="3" y="3" width="5" height="13" fill="#d6d6d6"/><rect x="10" y="5.5" width="5" height="7" fill="#d6d6d6"/></g>
<g transform="translate(1889.7,349.3)"><path d="M0 17h19" stroke="#d6d6d6" stroke-width="1.2"/><rect x="3" y="2" width="5" height="13" fill="#d6d6d6"/><rect x="10" y="8" width="5" height="7" fill="#d6d6d6"/></g>
<g transform="translate(1658,414.1)"><path d="M1 2h18M1 10h18" stroke="#d6d6d6" stroke-width="1.2"/><rect x="5" y="4" width="8" height="4" fill="#d6d6d6"/><rect x="4" y="12" width="10" height="5" fill="#d6d6d6"/></g>
<g transform="translate(1698.3,414.1)"><path d="M1 5h18M1 13h18" stroke="#d6d6d6" stroke-width="1.2"/><rect x="5" y="3" width="8" height="4" fill="#d6d6d6"/><rect x="4" y="11" width="10" height="5" fill="#d6d6d6"/></g>
<g transform="translate(1739.3,414.1)"><path d="M1 9h18M1 17h18" stroke="#d6d6d6" stroke-width="1.2"/><rect x="5" y="4" width="8" height="4" fill="#d6d6d6"/><rect x="4" y="11" width="10" height="5" fill="#d6d6d6"/></g>
<g transform="translate(1809.9,414.1)"><path d="M2 1v18M11 1v18" stroke="#d6d6d6" stroke-width="1.2"/><rect x="4" y="4" width="5" height="11" fill="#d6d6d6"/><rect x="13" y="6" width="4" height="8" fill="#d6d6d6"/></g>
<g transform="translate(1850,414.1)"><path d="M6 1v18M14 1v18" stroke="#d6d6d6" stroke-width="1.2"/><rect x="4" y="4" width="5" height="11" fill="#d6d6d6"/><rect x="12" y="6" width="4" height="8" fill="#d6d6d6"/></g>
<g transform="translate(1889.7,414.1)"><path d="M11 1v18M18 1v18" stroke="#d6d6d6" stroke-width="1.2"/><rect x="4" y="4" width="5" height="11" fill="#d6d6d6"/><rect x="12" y="6" width="4" height="8" fill="#d6d6d6"/></g>
<g transform="translate(1658,478.9)"><rect x="7" y="3" width="8" height="5" fill="#d6d6d6"/><rect x="5" y="11" width="12" height="5" fill="#d6d6d6"/><path d="M2 4v12M0.5 6l1.5-2 1.5 2M0.5 14l1.5 2 1.5-2" fill="none" stroke="#d6d6d6" stroke-width="1"/></g>
<g transform="translate(1692.9,478.9)"><rect x="3" y="6" width="5" height="12" fill="#d6d6d6"/><rect x="10" y="7" width="5" height="8" fill="#d6d6d6"/><path d="M4 2h10M5 0.5l-1.5 1.5 1.5 1.5M13 0.5l1.5 1.5-1.5 1.5M7 1v4M11 1v4" fill="none" stroke="#d6d6d6" stroke-width="1"/></g>
<rect x="1722" y="475" width="68" height="25" fill="#4f4f4f" stroke="#4b4b4b"/>
<path d="M1729 484l3-3 3 3M1729 491l3 3 3-3M1740 476v23" fill="none" stroke="#666" stroke-width="1"/>
<text stroke="#6a6a6a" stroke-width="0.4" x="1746" y="492" font-family="Liberation Sans" font-size="12" fill="#6a6a6a">0 mm</text>
<g transform="translate(1819.5,478.9)"><path d="M6 5h6l4 4v8H6z" fill="#888" stroke="#d6d6d6" stroke-width="1.2"/><path d="M3 1v5M1 3h5" stroke="#d6d6d6" stroke-width="1"/></g>
<rect x="1851.4" y="474.8" width="26" height="25.7" rx="2" fill="#2a2a2a"/>
<g transform="translate(1855.5,478.9)"><rect x="2.5" y="2.5" width="13" height="13" fill="none" stroke="#d6d6d6" stroke-width="1.1" stroke-dasharray="2 1.2"/><rect x="1" y="1" width="3" height="3" fill="#d6d6d6"/><rect x="14" y="1" width="3" height="3" fill="#d6d6d6"/><rect x="1" y="14" width="3" height="3" fill="#d6d6d6"/><rect x="14" y="14" width="3" height="3" fill="#d6d6d6"/><circle cx="9" cy="9" r="1" fill="#d6d6d6"/></g>
<g transform="translate(1889.7,478.9)"><rect x="2.5" y="2.5" width="13" height="13" fill="none" stroke="#d6d6d6" stroke-width="1.1" stroke-dasharray="2 1.2"/><rect x="1" y="1" width="3" height="3" fill="#d6d6d6"/><rect x="14" y="1" width="3" height="3" fill="#d6d6d6"/><rect x="1" y="14" width="3" height="3" fill="#d6d6d6"/><rect x="14" y="14" width="3" height="3" fill="#d6d6d6"/><path d="M5 5l7 7" stroke="#d6d6d6" stroke-width="1.5"/></g></svg></div>
</div>
<div class="a" id="rulers" style="left:0;top:0;width:1920px;height:1241px;pointer-events:none">
<svg style="left:0;top:0" width="1920" height="1241">
<defs><clipPath id="rc"><rect x="82" y="151" width="1500" height="1012"/></clipPath></defs>
<g clip-path="url(#rc)">
<path d="M82.3 151V168" stroke="#7a7a7a" stroke-width="1"/>
<path d="M107.3 165V168" stroke="#5e5e5e" stroke-width="1"/>
<path d="M115.6 165V168" stroke="#5e5e5e" stroke-width="1"/>
<text stroke="#cfcfcf" stroke-width="0.4" x="85.6" y="163.6" font-size="11.6" letter-spacing="0.4" fill="#cfcfcf" font-family="Liberation Sans">700</text>
<path d="M123.9 151V168" stroke="#7a7a7a" stroke-width="1"/>
<path d="M132.2 165V168" stroke="#5e5e5e" stroke-width="1"/>
<path d="M140.5 165V168" stroke="#5e5e5e" stroke-width="1"/>
<path d="M148.9 165V168" stroke="#5e5e5e" stroke-width="1"/>
<path d="M157.2 165V168" stroke="#5e5e5e" stroke-width="1"/>
<text stroke="#cfcfcf" stroke-width="0.4" x="127.2" y="163.6" font-size="11.6" letter-spacing="0.4" fill="#cfcfcf" font-family="Liberation Sans">750</text>
<path d="M165.5 151V168" stroke="#7a7a7a" stroke-width="1"/>
<path d="M173.8 165V168" stroke="#5e5e5e" stroke-width="1"/>
<path d="M182.1 165V168" stroke="#5e5e5e" stroke-width="1"/>
<path d="M190.5 165V168" stroke="#5e5e5e" stroke-width="1"/>
<path d="M198.8 165V168" stroke="#5e5e5e" stroke-width="1"/>
<text stroke="#cfcfcf" stroke-width="0.4" x="168.8" y="163.6" font-size="11.6" letter-spacing="0.4" fill="#cfcfcf" font-family="Liberation Sans">800</text>
<path d="M207.1 151V168" stroke="#7a7a7a" stroke-width="1"/>
<path d="M215.4 165V168" stroke="#5e5e5e" stroke-width="1"/>
<path d="M223.7 165V168" stroke="#5e5e5e" stroke-width="1"/>
<path d="M232.1 165V168" stroke="#5e5e5e" stroke-width="1"/>
<path d="M240.4 165V168" stroke="#5e5e5e" stroke-width="1"/>
<text stroke="#cfcfcf" stroke-width="0.4" x="210.4" y="163.6" font-size="11.6" letter-spacing="0.4" fill="#cfcfcf" font-family="Liberation Sans">850</text>
<path d="M248.7 151V168" stroke="#7a7a7a" stroke-width="1"/>
<path d="M257.0 165V168" stroke="#5e5e5e" stroke-width="1"/>
<path d="M265.3 165V168" stroke="#5e5e5e" stroke-width="1"/>
<path d="M273.7 165V168" stroke="#5e5e5e" stroke-width="1"/>
<path d="M282.0 165V168" stroke="#5e5e5e" stroke-width="1"/>
<text stroke="#cfcfcf" stroke-width="0.4" x="252.0" y="163.6" font-size="11.6" letter-spacing="0.4" fill="#cfcfcf" font-family="Liberation Sans">900</text>
<path d="M290.3 151V168" stroke="#7a7a7a" stroke-width="1"/>
<path d="M298.6 165V168" stroke="#5e5e5e" stroke-width="1"/>
<path d="M306.9 165V168" stroke="#5e5e5e" stroke-width="1"/>
<path d="M315.3 165V168" stroke="#5e5e5e" stroke-width="1"/>
<path d="M323.6 165V168" stroke="#5e5e5e" stroke-width="1"/>
<text stroke="#cfcfcf" stroke-width="0.4" x="293.6" y="163.6" font-size="11.6" letter-spacing="0.4" fill="#cfcfcf" font-family="Liberation Sans">950</text>
<path d="M331.9 151V168" stroke="#7a7a7a" stroke-width="1"/>
<path d="M340.2 165V168" stroke="#5e5e5e" stroke-width="1"/>
<path d="M348.5 165V168" stroke="#5e5e5e" stroke-width="1"/>
<path d="M356.9 165V168" stroke="#5e5e5e" stroke-width="1"/>
<path d="M365.2 165V168" stroke="#5e5e5e" stroke-width="1"/>
<text stroke="#cfcfcf" stroke-width="0.4" x="335.2" y="163.6" font-size="11.6" letter-spacing="0.4" fill="#cfcfcf" font-family="Liberation Sans">1000</text>
<path d="M373.5 151V168" stroke="#7a7a7a" stroke-width="1"/>
<path d="M381.8 165V168" stroke="#5e5e5e" stroke-width="1"/>
<path d="M390.1 165V168" stroke="#5e5e5e" stroke-width="1"/>
<path d="M398.5 165V168" stroke="#5e5e5e" stroke-width="1"/>
<path d="M406.8 165V168" stroke="#5e5e5e" stroke-width="1"/>
<text stroke="#cfcfcf" stroke-width="0.4" x="376.8" y="163.6" font-size="11.6" letter-spacing="0.4" fill="#cfcfcf" font-family="Liberation Sans">1050</text>
<path d="M415.1 151V168" stroke="#7a7a7a" stroke-width="1"/>
<path d="M423.4 165V168" stroke="#5e5e5e" stroke-width="1"/>
<path d="M431.7 165V168" stroke="#5e5e5e" stroke-width="1"/>
<path d="M440.1 165V168" stroke="#5e5e5e" stroke-width="1"/>
<path d="M448.4 165V168" stroke="#5e5e5e" stroke-width="1"/>
<text stroke="#cfcfcf" stroke-width="0.4" x="418.4" y="163.6" font-size="11.6" letter-spacing="0.4" fill="#cfcfcf" font-family="Liberation Sans">1100</text>
<path d="M456.7 151V168" stroke="#7a7a7a" stroke-width="1"/>
<path d="M465.0 165V168" stroke="#5e5e5e" stroke-width="1"/>
<path d="M473.3 165V168" stroke="#5e5e5e" stroke-width="1"/>
<path d="M481.7 165V168" stroke="#5e5e5e" stroke-width="1"/>
<path d="M490.0 165V168" stroke="#5e5e5e" stroke-width="1"/>
<text stroke="#cfcfcf" stroke-width="0.4" x="460.0" y="163.6" font-size="11.6" letter-spacing="0.4" fill="#cfcfcf" font-family="Liberation Sans">1150</text>
<path d="M498.3 151V168" stroke="#7a7a7a" stroke-width="1"/>
<path d="M506.6 165V168" stroke="#5e5e5e" stroke-width="1"/>
<path d="M514.9 165V168" stroke="#5e5e5e" stroke-width="1"/>
<path d="M523.3 165V168" stroke="#5e5e5e" stroke-width="1"/>
<path d="M531.6 165V168" stroke="#5e5e5e" stroke-width="1"/>
<text stroke="#cfcfcf" stroke-width="0.4" x="501.6" y="163.6" font-size="11.6" letter-spacing="0.4" fill="#cfcfcf" font-family="Liberation Sans">1200</text>
<path d="M539.9 151V168" stroke="#7a7a7a" stroke-width="1"/>
<path d="M548.2 165V168" stroke="#5e5e5e" stroke-width="1"/>
<path d="M556.5 165V168" stroke="#5e5e5e" stroke-width="1"/>
<path d="M564.9 165V168" stroke="#5e5e5e" stroke-width="1"/>
<path d="M573.2 165V168" stroke="#5e5e5e" stroke-width="1"/>
<text stroke="#cfcfcf" stroke-width="0.4" x="543.2" y="163.6" font-size="11.6" letter-spacing="0.4" fill="#cfcfcf" font-family="Liberation Sans">1250</text>
<path d="M581.5 151V168" stroke="#7a7a7a" stroke-width="1"/>
<path d="M589.8 165V168" stroke="#5e5e5e" stroke-width="1"/>
<path d="M598.1 165V168" stroke="#5e5e5e" stroke-width="1"/>
<path d="M606.5 165V168" stroke="#5e5e5e" stroke-width="1"/>
<path d="M614.8 165V168" stroke="#5e5e5e" stroke-width="1"/>
<text stroke="#cfcfcf" stroke-width="0.4" x="584.8" y="163.6" font-size="11.6" letter-spacing="0.4" fill="#cfcfcf" font-family="Liberation Sans">1300</text>
<path d="M623.1 151V168" stroke="#7a7a7a" stroke-width="1"/>
<path d="M631.4 165V168" stroke="#5e5e5e" stroke-width="1"/>
<path d="M639.7 165V168" stroke="#5e5e5e" stroke-width="1"/>
<path d="M648.1 165V168" stroke="#5e5e5e" stroke-width="1"/>
<path d="M656.4 165V168" stroke="#5e5e5e" stroke-width="1"/>
<text stroke="#cfcfcf" stroke-width="0.4" x="626.4" y="163.6" font-size="11.6" letter-spacing="0.4" fill="#cfcfcf" font-family="Liberation Sans">1350</text>
<path d="M664.7 151V168" stroke="#7a7a7a" stroke-width="1"/>
<path d="M673.0 165V168" stroke="#5e5e5e" stroke-width="1"/>
<path d="M681.3 165V168" stroke="#5e5e5e" stroke-width="1"/>
<path d="M689.7 165V168" stroke="#5e5e5e" stroke-width="1"/>
<path d="M698.0 165V168" stroke="#5e5e5e" stroke-width="1"/>
<text stroke="#cfcfcf" stroke-width="0.4" x="668.0" y="163.6" font-size="11.6" letter-spacing="0.4" fill="#cfcfcf" font-family="Liberation Sans">1400</text>
<path d="M706.3 151V168" stroke="#7a7a7a" stroke-width="1"/>
<path d="M714.6 165V168" stroke="#5e5e5e" stroke-width="1"/>
<path d="M722.9 165V168" stroke="#5e5e5e" stroke-width="1"/>
<path d="M731.3 165V168" stroke="#5e5e5e" stroke-width="1"/>
<path d="M739.6 165V168" stroke="#5e5e5e" stroke-width="1"/>
<text stroke="#cfcfcf" stroke-width="0.4" x="709.6" y="163.6" font-size="11.6" letter-spacing="0.4" fill="#cfcfcf" font-family="Liberation Sans">1450</text>
<path d="M747.9 151V168" stroke="#7a7a7a" stroke-width="1"/>
<path d="M756.2 165V168" stroke="#5e5e5e" stroke-width="1"/>
<path d="M764.5 165V168" stroke="#5e5e5e" stroke-width="1"/>
<path d="M772.9 165V168" stroke="#5e5e5e" stroke-width="1"/>
<path d="M781.2 165V168" stroke="#5e5e5e" stroke-width="1"/>
<text stroke="#cfcfcf" stroke-width="0.4" x="751.2" y="163.6" font-size="11.6" letter-spacing="0.4" fill="#cfcfcf" font-family="Liberation Sans">1500</text>
<path d="M789.5 151V168" stroke="#7a7a7a" stroke-width="1"/>
<path d="M797.8 165V168" stroke="#5e5e5e" stroke-width="1"/>
<path d="M806.1 165V168" stroke="#5e5e5e" stroke-width="1"/>
<path d="M814.5 165V168" stroke="#5e5e5e" stroke-width="1"/>
<path d="M822.8 165V168" stroke="#5e5e5e" stroke-width="1"/>
<text stroke="#cfcfcf" stroke-width="0.4" x="792.8" y="163.6" font-size="11.6" letter-spacing="0.4" fill="#cfcfcf" font-family="Liberation Sans">1550</text>
<path d="M831.1 151V168" stroke="#7a7a7a" stroke-width="1"/>
<path d="M839.4 165V168" stroke="#5e5e5e" stroke-width="1"/>
<path d="M847.7 165V168" stroke="#5e5e5e" stroke-width="1"/>
<path d="M856.1 165V168" stroke="#5e5e5e" stroke-width="1"/>
<path d="M864.4 165V168" stroke="#5e5e5e" stroke-width="1"/>
<text stroke="#cfcfcf" stroke-width="0.4" x="834.4" y="163.6" font-size="11.6" letter-spacing="0.4" fill="#cfcfcf" font-family="Liberation Sans">1600</text>
<path d="M872.7 151V168" stroke="#7a7a7a" stroke-width="1"/>
<path d="M881.0 165V168" stroke="#5e5e5e" stroke-width="1"/>
<path d="M889.3 165V168" stroke="#5e5e5e" stroke-width="1"/>
<path d="M897.7 165V168" stroke="#5e5e5e" stroke-width="1"/>
<path d="M906.0 165V168" stroke="#5e5e5e" stroke-width="1"/>
<text stroke="#cfcfcf" stroke-width="0.4" x="876.0" y="163.6" font-size="11.6" letter-spacing="0.4" fill="#cfcfcf" font-family="Liberation Sans">1650</text>
<path d="M914.3 151V168" stroke="#7a7a7a" stroke-width="1"/>
<path d="M922.6 165V168" stroke="#5e5e5e" stroke-width="1"/>
<path d="M930.9 165V168" stroke="#5e5e5e" stroke-width="1"/>
<path d="M939.3 165V168" stroke="#5e5e5e" stroke-width="1"/>
<path d="M947.6 165V168" stroke="#5e5e5e" stroke-width="1"/>
<text stroke="#cfcfcf" stroke-width="0.4" x="917.6" y="163.6" font-size="11.6" letter-spacing="0.4" fill="#cfcfcf" font-family="Liberation Sans">1700</text>
<path d="M955.9 151V168" stroke="#7a7a7a" stroke-width="1"/>
<path d="M964.2 165V168" stroke="#5e5e5e" stroke-width="1"/>
<path d="M972.5 165V168" stroke="#5e5e5e" stroke-width="1"/>
<path d="M980.9 165V168" stroke="#5e5e5e" stroke-width="1"/>
<path d="M989.2 165V168" stroke="#5e5e5e" stroke-width="1"/>
<text stroke="#cfcfcf" stroke-width="0.4" x="959.2" y="163.6" font-size="11.6" letter-spacing="0.4" fill="#cfcfcf" font-family="Liberation Sans">1750</text>
<path d="M997.5 151V168" stroke="#7a7a7a" stroke-width="1"/>
<path d="M1005.8 165V168" stroke="#5e5e5e" stroke-width="1"/>
<path d="M1014.1 165V168" stroke="#5e5e5e" stroke-width="1"/>
<path d="M1022.5 165V168" stroke="#5e5e5e" stroke-width="1"/>
<path d="M1030.8 165V168" stroke="#5e5e5e" stroke-width="1"/>
<text stroke="#cfcfcf" stroke-width="0.4" x="1000.8" y="163.6" font-size="11.6" letter-spacing="0.4" fill="#cfcfcf" font-family="Liberation Sans">1800</text>
<path d="M1039.1 151V168" stroke="#7a7a7a" stroke-width="1"/>
<path d="M1047.4 165V168" stroke="#5e5e5e" stroke-width="1"/>
<path d="M1055.7 165V168" stroke="#5e5e5e" stroke-width="1"/>
<path d="M1064.1 165V168" stroke="#5e5e5e" stroke-width="1"/>
<path d="M1072.4 165V168" stroke="#5e5e5e" stroke-width="1"/>
<text stroke="#cfcfcf" stroke-width="0.4" x="1042.4" y="163.6" font-size="11.6" letter-spacing="0.4" fill="#cfcfcf" font-family="Liberation Sans">1850</text>
<path d="M1080.7 151V168" stroke="#7a7a7a" stroke-width="1"/>
<path d="M1089.0 165V168" stroke="#5e5e5e" stroke-width="1"/>
<path d="M1097.3 165V168" stroke="#5e5e5e" stroke-width="1"/>
<path d="M1105.7 165V168" stroke="#5e5e5e" stroke-width="1"/>
<path d="M1114.0 165V168" stroke="#5e5e5e" stroke-width="1"/>
<text stroke="#cfcfcf" stroke-width="0.4" x="1084.0" y="163.6" font-size="11.6" letter-spacing="0.4" fill="#cfcfcf" font-family="Liberation Sans">1900</text>
<path d="M1122.3 151V168" stroke="#7a7a7a" stroke-width="1"/>
<path d="M1130.6 165V168" stroke="#5e5e5e" stroke-width="1"/>
<path d="M1138.9 165V168" stroke="#5e5e5e" stroke-width="1"/>
<path d="M1147.3 165V168" stroke="#5e5e5e" stroke-width="1"/>
<path d="M1155.6 165V168" stroke="#5e5e5e" stroke-width="1"/>
<text stroke="#cfcfcf" stroke-width="0.4" x="1125.6" y="163.6" font-size="11.6" letter-spacing="0.4" fill="#cfcfcf" font-family="Liberation Sans">1950</text>
<path d="M1163.9 151V168" stroke="#7a7a7a" stroke-width="1"/>
<path d="M1172.2 165V168" stroke="#5e5e5e" stroke-width="1"/>
<path d="M1180.5 165V168" stroke="#5e5e5e" stroke-width="1"/>
<path d="M1188.9 165V168" stroke="#5e5e5e" stroke-width="1"/>
<path d="M1197.2 165V168" stroke="#5e5e5e" stroke-width="1"/>
<text stroke="#cfcfcf" stroke-width="0.4" x="1167.2" y="163.6" font-size="11.6" letter-spacing="0.4" fill="#cfcfcf" font-family="Liberation Sans">2000</text>
<path d="M1205.5 151V168" stroke="#7a7a7a" stroke-width="1"/>
<path d="M1213.8 165V168" stroke="#5e5e5e" stroke-width="1"/>
<path d="M1222.1 165V168" stroke="#5e5e5e" stroke-width="1"/>
<path d="M1230.5 165V168" stroke="#5e5e5e" stroke-width="1"/>
<path d="M1238.8 165V168" stroke="#5e5e5e" stroke-width="1"/>
<text stroke="#cfcfcf" stroke-width="0.4" x="1208.8" y="163.6" font-size="11.6" letter-spacing="0.4" fill="#cfcfcf" font-family="Liberation Sans">2050</text>
<path d="M1247.1 151V168" stroke="#7a7a7a" stroke-width="1"/>
<path d="M1255.4 165V168" stroke="#5e5e5e" stroke-width="1"/>
<path d="M1263.7 165V168" stroke="#5e5e5e" stroke-width="1"/>
<path d="M1272.1 165V168" stroke="#5e5e5e" stroke-width="1"/>
<path d="M1280.4 165V168" stroke="#5e5e5e" stroke-width="1"/>
<text stroke="#cfcfcf" stroke-width="0.4" x="1250.4" y="163.6" font-size="11.6" letter-spacing="0.4" fill="#cfcfcf" font-family="Liberation Sans">2100</text>
<path d="M1288.7 151V168" stroke="#7a7a7a" stroke-width="1"/>
<path d="M1297.0 165V168" stroke="#5e5e5e" stroke-width="1"/>
<path d="M1305.3 165V168" stroke="#5e5e5e" stroke-width="1"/>
<path d="M1313.7 165V168" stroke="#5e5e5e" stroke-width="1"/>
<path d="M1322.0 165V168" stroke="#5e5e5e" stroke-width="1"/>
<text stroke="#cfcfcf" stroke-width="0.4" x="1292.0" y="163.6" font-size="11.6" letter-spacing="0.4" fill="#cfcfcf" font-family="Liberation Sans">2150</text>
<path d="M1330.3 151V168" stroke="#7a7a7a" stroke-width="1"/>
<path d="M1338.6 165V168" stroke="#5e5e5e" stroke-width="1"/>
<path d="M1346.9 165V168" stroke="#5e5e5e" stroke-width="1"/>
<path d="M1355.3 165V168" stroke="#5e5e5e" stroke-width="1"/>
<path d="M1363.6 165V168" stroke="#5e5e5e" stroke-width="1"/>
<text stroke="#cfcfcf" stroke-width="0.4" x="1333.6" y="163.6" font-size="11.6" letter-spacing="0.4" fill="#cfcfcf" font-family="Liberation Sans">2200</text>
<path d="M1371.9 151V168" stroke="#7a7a7a" stroke-width="1"/>
<path d="M1380.2 165V168" stroke="#5e5e5e" stroke-width="1"/>
<path d="M1388.5 165V168" stroke="#5e5e5e" stroke-width="1"/>
<path d="M1396.9 165V168" stroke="#5e5e5e" stroke-width="1"/>
<path d="M1405.2 165V168" stroke="#5e5e5e" stroke-width="1"/>
<text stroke="#cfcfcf" stroke-width="0.4" x="1375.2" y="163.6" font-size="11.6" letter-spacing="0.4" fill="#cfcfcf" font-family="Liberation Sans">2250</text>
<path d="M1413.5 151V168" stroke="#7a7a7a" stroke-width="1"/>
<path d="M1421.8 165V168" stroke="#5e5e5e" stroke-width="1"/>
<path d="M1430.1 165V168" stroke="#5e5e5e" stroke-width="1"/>
<path d="M1438.5 165V168" stroke="#5e5e5e" stroke-width="1"/>
<path d="M1446.8 165V168" stroke="#5e5e5e" stroke-width="1"/>
<text stroke="#cfcfcf" stroke-width="0.4" x="1416.8" y="163.6" font-size="11.6" letter-spacing="0.4" fill="#cfcfcf" font-family="Liberation Sans">2300</text>
<path d="M1455.1 151V168" stroke="#7a7a7a" stroke-width="1"/>
<path d="M1463.4 165V168" stroke="#5e5e5e" stroke-width="1"/>
<path d="M1471.7 165V168" stroke="#5e5e5e" stroke-width="1"/>
<path d="M1480.1 165V168" stroke="#5e5e5e" stroke-width="1"/>
<path d="M1488.4 165V168" stroke="#5e5e5e" stroke-width="1"/>
<text stroke="#cfcfcf" stroke-width="0.4" x="1458.4" y="163.6" font-size="11.6" letter-spacing="0.4" fill="#cfcfcf" font-family="Liberation Sans">2350</text>
<path d="M1496.7 151V168" stroke="#7a7a7a" stroke-width="1"/>
<path d="M1505.0 165V168" stroke="#5e5e5e" stroke-width="1"/>
<path d="M1513.3 165V168" stroke="#5e5e5e" stroke-width="1"/>
<path d="M1521.7 165V168" stroke="#5e5e5e" stroke-width="1"/>
<path d="M1530.0 165V168" stroke="#5e5e5e" stroke-width="1"/>
<text stroke="#cfcfcf" stroke-width="0.4" x="1500.0" y="163.6" font-size="11.6" letter-spacing="0.4" fill="#cfcfcf" font-family="Liberation Sans">2400</text>
<path d="M1538.3 151V168" stroke="#7a7a7a" stroke-width="1"/>
<path d="M1546.6 165V168" stroke="#5e5e5e" stroke-width="1"/>
<path d="M1554.9 165V168" stroke="#5e5e5e" stroke-width="1"/>
<path d="M1563.3 165V168" stroke="#5e5e5e" stroke-width="1"/>
<path d="M1571.6 165V168" stroke="#5e5e5e" stroke-width="1"/>
<text stroke="#cfcfcf" stroke-width="0.4" x="1541.6" y="163.6" font-size="11.6" letter-spacing="0.4" fill="#cfcfcf" font-family="Liberation Sans">2450</text>
<path d="M1579.9 151V168" stroke="#7a7a7a" stroke-width="1"/>
<path d="M96 168.4H100" stroke="#6a6a6a" stroke-width="1"/>
<path d="M96 176.8H100" stroke="#6a6a6a" stroke-width="1"/>
<path d="M96 185.1H100" stroke="#6a6a6a" stroke-width="1"/>
<text stroke="#cfcfcf" stroke-width="0.4" x="88" y="177.9" font-size="11.3" fill="#cfcfcf" font-family="Liberation Sans" text-anchor="middle">5</text>
<text stroke="#cfcfcf" stroke-width="0.4" x="88" y="187.5" font-size="11.3" fill="#cfcfcf" font-family="Liberation Sans" text-anchor="middle">0</text>
<path d="M82 193.4H100" stroke="#7a7a7a" stroke-width="1"/>
<path d="M96 201.7H100" stroke="#6a6a6a" stroke-width="1"/>
<path d="M96 210.0H100" stroke="#6a6a6a" stroke-width="1"/>
<path d="M96 218.4H100" stroke="#6a6a6a" stroke-width="1"/>
<path d="M96 226.7H100" stroke="#6a6a6a" stroke-width="1"/>
<text stroke="#cfcfcf" stroke-width="0.4" x="88" y="200.3" font-size="11.3" fill="#cfcfcf" font-family="Liberation Sans" text-anchor="middle">1</text>
<text stroke="#cfcfcf" stroke-width="0.4" x="88" y="209.9" font-size="11.3" fill="#cfcfcf" font-family="Liberation Sans" text-anchor="middle">7</text>
<text stroke="#cfcfcf" stroke-width="0.4" x="88" y="219.5" font-size="11.3" fill="#cfcfcf" font-family="Liberation Sans" text-anchor="middle">0</text>
<text stroke="#cfcfcf" stroke-width="0.4" x="88" y="229.1" font-size="11.3" fill="#cfcfcf" font-family="Liberation Sans" text-anchor="middle">0</text>
<path d="M82 235.0H100" stroke="#7a7a7a" stroke-width="1"/>
<path d="M96 243.3H100" stroke="#6a6a6a" stroke-width="1"/>
<path d="M96 251.6H100" stroke="#6a6a6a" stroke-width="1"/>
<path d="M96 260.0H100" stroke="#6a6a6a" stroke-width="1"/>
<path d="M96 268.3H100" stroke="#6a6a6a" stroke-width="1"/>
<text stroke="#cfcfcf" stroke-width="0.4" x="88" y="241.9" font-size="11.3" fill="#cfcfcf" font-family="Liberation Sans" text-anchor="middle">1</text>
<text stroke="#cfcfcf" stroke-width="0.4" x="88" y="251.5" font-size="11.3" fill="#cfcfcf" font-family="Liberation Sans" text-anchor="middle">7</text>
<text stroke="#cfcfcf" stroke-width="0.4" x="88" y="261.1" font-size="11.3" fill="#cfcfcf" font-family="Liberation Sans" text-anchor="middle">5</text>
<text stroke="#cfcfcf" stroke-width="0.4" x="88" y="270.7" font-size="11.3" fill="#cfcfcf" font-family="Liberation Sans" text-anchor="middle">0</text>
<path d="M82 276.6H100" stroke="#7a7a7a" stroke-width="1"/>
<path d="M96 284.9H100" stroke="#6a6a6a" stroke-width="1"/>
<path d="M96 293.2H100" stroke="#6a6a6a" stroke-width="1"/>
<path d="M96 301.6H100" stroke="#6a6a6a" stroke-width="1"/>
<path d="M96 309.9H100" stroke="#6a6a6a" stroke-width="1"/>
<text stroke="#cfcfcf" stroke-width="0.4" x="88" y="283.5" font-size="11.3" fill="#cfcfcf" font-family="Liberation Sans" text-anchor="middle">1</text>
<text stroke="#cfcfcf" stroke-width="0.4" x="88" y="293.1" font-size="11.3" fill="#cfcfcf" font-family="Liberation Sans" text-anchor="middle">8</text>
<text stroke="#cfcfcf" stroke-width="0.4" x="88" y="302.7" font-size="11.3" fill="#cfcfcf" font-family="Liberation Sans" text-anchor="middle">0</text>
<text stroke="#cfcfcf" stroke-width="0.4" x="88" y="312.3" font-size="11.3" fill="#cfcfcf" font-family="Liberation Sans" text-anchor="middle">0</text>
<path d="M82 318.2H100" stroke="#7a7a7a" stroke-width="1"/>
<path d="M96 326.5H100" stroke="#6a6a6a" stroke-width="1"/>
<path d="M96 334.8H100" stroke="#6a6a6a" stroke-width="1"/>
<path d="M96 343.2H100" stroke="#6a6a6a" stroke-width="1"/>
<path d="M96 351.5H100" stroke="#6a6a6a" stroke-width="1"/>
<text stroke="#cfcfcf" stroke-width="0.4" x="88" y="325.1" font-size="11.3" fill="#cfcfcf" font-family="Liberation Sans" text-anchor="middle">1</text>
<text stroke="#cfcfcf" stroke-width="0.4" x="88" y="334.7" font-size="11.3" fill="#cfcfcf" font-family="Liberation Sans" text-anchor="middle">8</text>
<text stroke="#cfcfcf" stroke-width="0.4" x="88" y="344.3" font-size="11.3" fill="#cfcfcf" font-family="Liberation Sans" text-anchor="middle">5</text>
<text stroke="#cfcfcf" stroke-width="0.4" x="88" y="353.9" font-size="11.3" fill="#cfcfcf" font-family="Liberation Sans" text-anchor="middle">0</text>
<path d="M82 359.8H100" stroke="#7a7a7a" stroke-width="1"/>
<path d="M96 368.1H100" stroke="#6a6a6a" stroke-width="1"/>
<path d="M96 376.4H100" stroke="#6a6a6a" stroke-width="1"/>
<path d="M96 384.8H100" stroke="#6a6a6a" stroke-width="1"/>
<path d="M96 393.1H100" stroke="#6a6a6a" stroke-width="1"/>
<text stroke="#cfcfcf" stroke-width="0.4" x="88" y="366.7" font-size="11.3" fill="#cfcfcf" font-family="Liberation Sans" text-anchor="middle">1</text>
<text stroke="#cfcfcf" stroke-width="0.4" x="88" y="376.3" font-size="11.3" fill="#cfcfcf" font-family="Liberation Sans" text-anchor="middle">9</text>
<text stroke="#cfcfcf" stroke-width="0.4" x="88" y="385.9" font-size="11.3" fill="#cfcfcf" font-family="Liberation Sans" text-anchor="middle">0</text>
<text stroke="#cfcfcf" stroke-width="0.4" x="88" y="395.5" font-size="11.3" fill="#cfcfcf" font-family="Liberation Sans" text-anchor="middle">0</text>
<path d="M82 401.4H100" stroke="#7a7a7a" stroke-width="1"/>
<path d="M96 409.7H100" stroke="#6a6a6a" stroke-width="1"/>
<path d="M96 418.0H100" stroke="#6a6a6a" stroke-width="1"/>
<path d="M96 426.4H100" stroke="#6a6a6a" stroke-width="1"/>
<path d="M96 434.7H100" stroke="#6a6a6a" stroke-width="1"/>
<text stroke="#cfcfcf" stroke-width="0.4" x="88" y="408.3" font-size="11.3" fill="#cfcfcf" font-family="Liberation Sans" text-anchor="middle">1</text>
<text stroke="#cfcfcf" stroke-width="0.4" x="88" y="417.9" font-size="11.3" fill="#cfcfcf" font-family="Liberation Sans" text-anchor="middle">9</text>
<text stroke="#cfcfcf" stroke-width="0.4" x="88" y="427.5" font-size="11.3" fill="#cfcfcf" font-family="Liberation Sans" text-anchor="middle">5</text>
<text stroke="#cfcfcf" stroke-width="0.4" x="88" y="437.1" font-size="11.3" fill="#cfcfcf" font-family="Liberation Sans" text-anchor="middle">0</text>
<path d="M82 443.0H100" stroke="#7a7a7a" stroke-width="1"/>
<path d="M96 451.3H100" stroke="#6a6a6a" stroke-width="1"/>
<path d="M96 459.6H100" stroke="#6a6a6a" stroke-width="1"/>
<path d="M96 468.0H100" stroke="#6a6a6a" stroke-width="1"/>
<path d="M96 476.3H100" stroke="#6a6a6a" stroke-width="1"/>
<text stroke="#cfcfcf" stroke-width="0.4" x="88" y="449.9" font-size="11.3" fill="#cfcfcf" font-family="Liberation Sans" text-anchor="middle">2</text>
<text stroke="#cfcfcf" stroke-width="0.4" x="88" y="459.5" font-size="11.3" fill="#cfcfcf" font-family="Liberation Sans" text-anchor="middle">0</text>
<text stroke="#cfcfcf" stroke-width="0.4" x="88" y="469.1" font-size="11.3" fill="#cfcfcf" font-family="Liberation Sans" text-anchor="middle">0</text>
<text stroke="#cfcfcf" stroke-width="0.4" x="88" y="478.7" font-size="11.3" fill="#cfcfcf" font-family="Liberation Sans" text-anchor="middle">0</text>
<path d="M82 484.6H100" stroke="#7a7a7a" stroke-width="1"/>
<path d="M96 492.9H100" stroke="#6a6a6a" stroke-width="1"/>
<path d="M96 501.2H100" stroke="#6a6a6a" stroke-width="1"/>
<path d="M96 509.6H100" stroke="#6a6a6a" stroke-width="1"/>
<path d="M96 517.9H100" stroke="#6a6a6a" stroke-width="1"/>
<text stroke="#cfcfcf" stroke-width="0.4" x="88" y="491.5" font-size="11.3" fill="#cfcfcf" font-family="Liberation Sans" text-anchor="middle">2</text>
<text stroke="#cfcfcf" stroke-width="0.4" x="88" y="501.1" font-size="11.3" fill="#cfcfcf" font-family="Liberation Sans" text-anchor="middle">0</text>
<text stroke="#cfcfcf" stroke-width="0.4" x="88" y="510.7" font-size="11.3" fill="#cfcfcf" font-family="Liberation Sans" text-anchor="middle">5</text>
<text stroke="#cfcfcf" stroke-width="0.4" x="88" y="520.3" font-size="11.3" fill="#cfcfcf" font-family="Liberation Sans" text-anchor="middle">0</text>
<path d="M82 526.2H100" stroke="#7a7a7a" stroke-width="1"/>
<path d="M96 534.5H100" stroke="#6a6a6a" stroke-width="1"/>
<path d="M96 542.8H100" stroke="#6a6a6a" stroke-width="1"/>
<path d="M96 551.2H100" stroke="#6a6a6a" stroke-width="1"/>
<path d="M96 559.5H100" stroke="#6a6a6a" stroke-width="1"/>
<text stroke="#cfcfcf" stroke-width="0.4" x="88" y="533.1" font-size="11.3" fill="#cfcfcf" font-family="Liberation Sans" text-anchor="middle">2</text>
<text stroke="#cfcfcf" stroke-width="0.4" x="88" y="542.7" font-size="11.3" fill="#cfcfcf" font-family="Liberation Sans" text-anchor="middle">1</text>
<text stroke="#cfcfcf" stroke-width="0.4" x="88" y="552.3" font-size="11.3" fill="#cfcfcf" font-family="Liberation Sans" text-anchor="middle">0</text>
<text stroke="#cfcfcf" stroke-width="0.4" x="88" y="561.9" font-size="11.3" fill="#cfcfcf" font-family="Liberation Sans" text-anchor="middle">0</text>
<path d="M82 567.8H100" stroke="#7a7a7a" stroke-width="1"/>
<path d="M96 576.1H100" stroke="#6a6a6a" stroke-width="1"/>
<path d="M96 584.4H100" stroke="#6a6a6a" stroke-width="1"/>
<path d="M96 592.8H100" stroke="#6a6a6a" stroke-width="1"/>
<path d="M96 601.1H100" stroke="#6a6a6a" stroke-width="1"/>
<text stroke="#cfcfcf" stroke-width="0.4" x="88" y="574.7" font-size="11.3" fill="#cfcfcf" font-family="Liberation Sans" text-anchor="middle">2</text>
<text stroke="#cfcfcf" stroke-width="0.4" x="88" y="584.3" font-size="11.3" fill="#cfcfcf" font-family="Liberation Sans" text-anchor="middle">1</text>
<text stroke="#cfcfcf" stroke-width="0.4" x="88" y="593.9" font-size="11.3" fill="#cfcfcf" font-family="Liberation Sans" text-anchor="middle">5</text>
<text stroke="#cfcfcf" stroke-width="0.4" x="88" y="603.5" font-size="11.3" fill="#cfcfcf" font-family="Liberation Sans" text-anchor="middle">0</text>
<path d="M82 609.4H100" stroke="#7a7a7a" stroke-width="1"/>
<path d="M96 617.7H100" stroke="#6a6a6a" stroke-width="1"/>
<path d="M96 626.0H100" stroke="#6a6a6a" stroke-width="1"/>
<path d="M96 634.4H100" stroke="#6a6a6a" stroke-width="1"/>
<path d="M96 642.7H100" stroke="#6a6a6a" stroke-width="1"/>
<text stroke="#cfcfcf" stroke-width="0.4" x="88" y="616.3" font-size="11.3" fill="#cfcfcf" font-family="Liberation Sans" text-anchor="middle">2</text>
<text stroke="#cfcfcf" stroke-width="0.4" x="88" y="625.9" font-size="11.3" fill="#cfcfcf" font-family="Liberation Sans" text-anchor="middle">2</text>
<text stroke="#cfcfcf" stroke-width="0.4" x="88" y="635.5" font-size="11.3" fill="#cfcfcf" font-family="Liberation Sans" text-anchor="middle">0</text>
<text stroke="#cfcfcf" stroke-width="0.4" x="88" y="645.1" font-size="11.3" fill="#cfcfcf" font-family="Liberation Sans" text-anchor="middle">0</text>
<path d="M82 651.0H100" stroke="#7a7a7a" stroke-width="1"/>
<path d="M96 659.3H100" stroke="#6a6a6a" stroke-width="1"/>
<path d="M96 667.6H100" stroke="#6a6a6a" stroke-width="1"/>
<path d="M96 676.0H100" stroke="#6a6a6a" stroke-width="1"/>
<path d="M96 684.3H100" stroke="#6a6a6a" stroke-width="1"/>
<text stroke="#cfcfcf" stroke-width="0.4" x="88" y="657.9" font-size="11.3" fill="#cfcfcf" font-family="Liberation Sans" text-anchor="middle">2</text>
<text stroke="#cfcfcf" stroke-width="0.4" x="88" y="667.5" font-size="11.3" fill="#cfcfcf" font-family="Liberation Sans" text-anchor="middle">2</text>
<text stroke="#cfcfcf" stroke-width="0.4" x="88" y="677.1" font-size="11.3" fill="#cfcfcf" font-family="Liberation Sans" text-anchor="middle">5</text>
<text stroke="#cfcfcf" stroke-width="0.4" x="88" y="686.7" font-size="11.3" fill="#cfcfcf" font-family="Liberation Sans" text-anchor="middle">0</text>
<path d="M82 692.6H100" stroke="#7a7a7a" stroke-width="1"/>
<path d="M96 700.9H100" stroke="#6a6a6a" stroke-width="1"/>
<path d="M96 709.2H100" stroke="#6a6a6a" stroke-width="1"/>
<path d="M96 717.6H100" stroke="#6a6a6a" stroke-width="1"/>
<path d="M96 725.9H100" stroke="#6a6a6a" stroke-width="1"/>
<text stroke="#cfcfcf" stroke-width="0.4" x="88" y="699.5" font-size="11.3" fill="#cfcfcf" font-family="Liberation Sans" text-anchor="middle">2</text>
<text stroke="#cfcfcf" stroke-width="0.4" x="88" y="709.1" font-size="11.3" fill="#cfcfcf" font-family="Liberation Sans" text-anchor="middle">3</text>
<text stroke="#cfcfcf" stroke-width="0.4" x="88" y="718.7" font-size="11.3" fill="#cfcfcf" font-family="Liberation Sans" text-anchor="middle">0</text>
<text stroke="#cfcfcf" stroke-width="0.4" x="88" y="728.3" font-size="11.3" fill="#cfcfcf" font-family="Liberation Sans" text-anchor="middle">0</text>
<path d="M82 734.2H100" stroke="#7a7a7a" stroke-width="1"/>
<path d="M96 742.5H100" stroke="#6a6a6a" stroke-width="1"/>
<path d="M96 750.8H100" stroke="#6a6a6a" stroke-width="1"/>
<path d="M96 759.2H100" stroke="#6a6a6a" stroke-width="1"/>
<path d="M96 767.5H100" stroke="#6a6a6a" stroke-width="1"/>
<text stroke="#cfcfcf" stroke-width="0.4" x="88" y="741.1" font-size="11.3" fill="#cfcfcf" font-family="Liberation Sans" text-anchor="middle">2</text>
<text stroke="#cfcfcf" stroke-width="0.4" x="88" y="750.7" font-size="11.3" fill="#cfcfcf" font-family="Liberation Sans" text-anchor="middle">3</text>
<text stroke="#cfcfcf" stroke-width="0.4" x="88" y="760.3" font-size="11.3" fill="#cfcfcf" font-family="Liberation Sans" text-anchor="middle">5</text>
<text stroke="#cfcfcf" stroke-width="0.4" x="88" y="769.9" font-size="11.3" fill="#cfcfcf" font-family="Liberation Sans" text-anchor="middle">0</text>
<path d="M82 775.8H100" stroke="#7a7a7a" stroke-width="1"/>
<path d="M96 784.1H100" stroke="#6a6a6a" stroke-width="1"/>
<path d="M96 792.4H100" stroke="#6a6a6a" stroke-width="1"/>
<path d="M96 800.8H100" stroke="#6a6a6a" stroke-width="1"/>
<path d="M96 809.1H100" stroke="#6a6a6a" stroke-width="1"/>
<text stroke="#cfcfcf" stroke-width="0.4" x="88" y="782.7" font-size="11.3" fill="#cfcfcf" font-family="Liberation Sans" text-anchor="middle">2</text>
<text stroke="#cfcfcf" stroke-width="0.4" x="88" y="792.3" font-size="11.3" fill="#cfcfcf" font-family="Liberation Sans" text-anchor="middle">4</text>
<text stroke="#cfcfcf" stroke-width="0.4" x="88" y="801.9" font-size="11.3" fill="#cfcfcf" font-family="Liberation Sans" text-anchor="middle">0</text>
<text stroke="#cfcfcf" stroke-width="0.4" x="88" y="811.5" font-size="11.3" fill="#cfcfcf" font-family="Liberation Sans" text-anchor="middle">0</text>
<path d="M82 817.4H100" stroke="#7a7a7a" stroke-width="1"/>
<path d="M96 825.7H100" stroke="#6a6a6a" stroke-width="1"/>
<path d="M96 834.0H100" stroke="#6a6a6a" stroke-width="1"/>
<path d="M96 842.4H100" stroke="#6a6a6a" stroke-width="1"/>
<path d="M96 850.7H100" stroke="#6a6a6a" stroke-width="1"/>
<text stroke="#cfcfcf" stroke-width="0.4" x="88" y="824.3" font-size="11.3" fill="#cfcfcf" font-family="Liberation Sans" text-anchor="middle">2</text>
<text stroke="#cfcfcf" stroke-width="0.4" x="88" y="833.9" font-size="11.3" fill="#cfcfcf" font-family="Liberation Sans" text-anchor="middle">4</text>
<text stroke="#cfcfcf" stroke-width="0.4" x="88" y="843.5" font-size="11.3" fill="#cfcfcf" font-family="Liberation Sans" text-anchor="middle">5</text>
<text stroke="#cfcfcf" stroke-width="0.4" x="88" y="853.1" font-size="11.3" fill="#cfcfcf" font-family="Liberation Sans" text-anchor="middle">0</text>
<path d="M82 859.0H100" stroke="#7a7a7a" stroke-width="1"/>
<path d="M96 867.3H100" stroke="#6a6a6a" stroke-width="1"/>
<path d="M96 875.6H100" stroke="#6a6a6a" stroke-width="1"/>
<path d="M96 884.0H100" stroke="#6a6a6a" stroke-width="1"/>
<path d="M96 892.3H100" stroke="#6a6a6a" stroke-width="1"/>
<text stroke="#cfcfcf" stroke-width="0.4" x="88" y="865.9" font-size="11.3" fill="#cfcfcf" font-family="Liberation Sans" text-anchor="middle">2</text>
<text stroke="#cfcfcf" stroke-width="0.4" x="88" y="875.5" font-size="11.3" fill="#cfcfcf" font-family="Liberation Sans" text-anchor="middle">5</text>
<text stroke="#cfcfcf" stroke-width="0.4" x="88" y="885.1" font-size="11.3" fill="#cfcfcf" font-family="Liberation Sans" text-anchor="middle">0</text>
<text stroke="#cfcfcf" stroke-width="0.4" x="88" y="894.7" font-size="11.3" fill="#cfcfcf" font-family="Liberation Sans" text-anchor="middle">0</text>
<path d="M82 900.6H100" stroke="#7a7a7a" stroke-width="1"/>
<path d="M96 908.9H100" stroke="#6a6a6a" stroke-width="1"/>
<path d="M96 917.2H100" stroke="#6a6a6a" stroke-width="1"/>
<path d="M96 925.6H100" stroke="#6a6a6a" stroke-width="1"/>
<path d="M96 933.9H100" stroke="#6a6a6a" stroke-width="1"/>
<text stroke="#cfcfcf" stroke-width="0.4" x="88" y="907.5" font-size="11.3" fill="#cfcfcf" font-family="Liberation Sans" text-anchor="middle">2</text>
<text stroke="#cfcfcf" stroke-width="0.4" x="88" y="917.1" font-size="11.3" fill="#cfcfcf" font-family="Liberation Sans" text-anchor="middle">5</text>
<text stroke="#cfcfcf" stroke-width="0.4" x="88" y="926.7" font-size="11.3" fill="#cfcfcf" font-family="Liberation Sans" text-anchor="middle">5</text>
<text stroke="#cfcfcf" stroke-width="0.4" x="88" y="936.3" font-size="11.3" fill="#cfcfcf" font-family="Liberation Sans" text-anchor="middle">0</text>
<path d="M82 942.2H100" stroke="#7a7a7a" stroke-width="1"/>
<path d="M96 950.5H100" stroke="#6a6a6a" stroke-width="1"/>
<path d="M96 958.8H100" stroke="#6a6a6a" stroke-width="1"/>
<path d="M96 967.2H100" stroke="#6a6a6a" stroke-width="1"/>
<path d="M96 975.5H100" stroke="#6a6a6a" stroke-width="1"/>
<text stroke="#cfcfcf" stroke-width="0.4" x="88" y="949.1" font-size="11.3" fill="#cfcfcf" font-family="Liberation Sans" text-anchor="middle">2</text>
<text stroke="#cfcfcf" stroke-width="0.4" x="88" y="958.7" font-size="11.3" fill="#cfcfcf" font-family="Liberation Sans" text-anchor="middle">6</text>
<text stroke="#cfcfcf" stroke-width="0.4" x="88" y="968.3" font-size="11.3" fill="#cfcfcf" font-family="Liberation Sans" text-anchor="middle">0</text>
<text stroke="#cfcfcf" stroke-width="0.4" x="88" y="977.9" font-size="11.3" fill="#cfcfcf" font-family="Liberation Sans" text-anchor="middle">0</text>
<path d="M82 983.8H100" stroke="#7a7a7a" stroke-width="1"/>
<path d="M96 992.1H100" stroke="#6a6a6a" stroke-width="1"/>
<path d="M96 1000.4H100" stroke="#6a6a6a" stroke-width="1"/>
<path d="M96 1008.8H100" stroke="#6a6a6a" stroke-width="1"/>
<path d="M96 1017.1H100" stroke="#6a6a6a" stroke-width="1"/>
<text stroke="#cfcfcf" stroke-width="0.4" x="88" y="990.7" font-size="11.3" fill="#cfcfcf" font-family="Liberation Sans" text-anchor="middle">2</text>
<text stroke="#cfcfcf" stroke-width="0.4" x="88" y="1000.3" font-size="11.3" fill="#cfcfcf" font-family="Liberation Sans" text-anchor="middle">6</text>
<text stroke="#cfcfcf" stroke-width="0.4" x="88" y="1009.9" font-size="11.3" fill="#cfcfcf" font-family="Liberation Sans" text-anchor="middle">5</text>
<text stroke="#cfcfcf" stroke-width="0.4" x="88" y="1019.5" font-size="11.3" fill="#cfcfcf" font-family="Liberation Sans" text-anchor="middle">0</text>
<path d="M82 1025.4H100" stroke="#7a7a7a" stroke-width="1"/>
<path d="M96 1033.7H100" stroke="#6a6a6a" stroke-width="1"/>
<path d="M96 1042.0H100" stroke="#6a6a6a" stroke-width="1"/>
<path d="M96 1050.4H100" stroke="#6a6a6a" stroke-width="1"/>
<path d="M96 1058.7H100" stroke="#6a6a6a" stroke-width="1"/>
<text stroke="#cfcfcf" stroke-width="0.4" x="88" y="1032.3" font-size="11.3" fill="#cfcfcf" font-family="Liberation Sans" text-anchor="middle">2</text>
<text stroke="#cfcfcf" stroke-width="0.4" x="88" y="1041.9" font-size="11.3" fill="#cfcfcf" font-family="Liberation Sans" text-anchor="middle">7</text>
<text stroke="#cfcfcf" stroke-width="0.4" x="88" y="1051.5" font-size="11.3" fill="#cfcfcf" font-family="Liberation Sans" text-anchor="middle">0</text>
<text stroke="#cfcfcf" stroke-width="0.4" x="88" y="1061.1" font-size="11.3" fill="#cfcfcf" font-family="Liberation Sans" text-anchor="middle">0</text>
<path d="M82 1067.0H100" stroke="#7a7a7a" stroke-width="1"/>
<path d="M96 1075.3H100" stroke="#6a6a6a" stroke-width="1"/>
<path d="M96 1083.6H100" stroke="#6a6a6a" stroke-width="1"/>
<path d="M96 1092.0H100" stroke="#6a6a6a" stroke-width="1"/>
<path d="M96 1100.3H100" stroke="#6a6a6a" stroke-width="1"/>
<text stroke="#cfcfcf" stroke-width="0.4" x="88" y="1073.9" font-size="11.3" fill="#cfcfcf" font-family="Liberation Sans" text-anchor="middle">2</text>
<text stroke="#cfcfcf" stroke-width="0.4" x="88" y="1083.5" font-size="11.3" fill="#cfcfcf" font-family="Liberation Sans" text-anchor="middle">7</text>
<text stroke="#cfcfcf" stroke-width="0.4" x="88" y="1093.1" font-size="11.3" fill="#cfcfcf" font-family="Liberation Sans" text-anchor="middle">5</text>
<text stroke="#cfcfcf" stroke-width="0.4" x="88" y="1102.7" font-size="11.3" fill="#cfcfcf" font-family="Liberation Sans" text-anchor="middle">0</text>
<path d="M82 1108.6H100" stroke="#7a7a7a" stroke-width="1"/>
<path d="M96 1116.9H100" stroke="#6a6a6a" stroke-width="1"/>
<path d="M96 1125.2H100" stroke="#6a6a6a" stroke-width="1"/>
<path d="M96 1133.6H100" stroke="#6a6a6a" stroke-width="1"/>
<path d="M96 1141.9H100" stroke="#6a6a6a" stroke-width="1"/>
<text stroke="#cfcfcf" stroke-width="0.4" x="88" y="1115.5" font-size="11.3" fill="#cfcfcf" font-family="Liberation Sans" text-anchor="middle">2</text>
<text stroke="#cfcfcf" stroke-width="0.4" x="88" y="1125.1" font-size="11.3" fill="#cfcfcf" font-family="Liberation Sans" text-anchor="middle">8</text>
<text stroke="#cfcfcf" stroke-width="0.4" x="88" y="1134.7" font-size="11.3" fill="#cfcfcf" font-family="Liberation Sans" text-anchor="middle">0</text>
<text stroke="#cfcfcf" stroke-width="0.4" x="88" y="1144.3" font-size="11.3" fill="#cfcfcf" font-family="Liberation Sans" text-anchor="middle">0</text>
<path d="M82 1150.2H100" stroke="#7a7a7a" stroke-width="1"/>
<path d="M96 1158.5H100" stroke="#6a6a6a" stroke-width="1"/>
<text stroke="#cfcfcf" stroke-width="0.4" x="88" y="1157.1" font-size="11.3" fill="#cfcfcf" font-family="Liberation Sans" text-anchor="middle">2</text>
</g>
<rect x="82" y="151" width="17" height="17" fill="#383838"/>
<path d="M82.5 156H99M87.5 151V168" stroke="#8a8a8a" stroke-width="1" stroke-dasharray="1 1.5"/>
</svg></div>
</body></html>
